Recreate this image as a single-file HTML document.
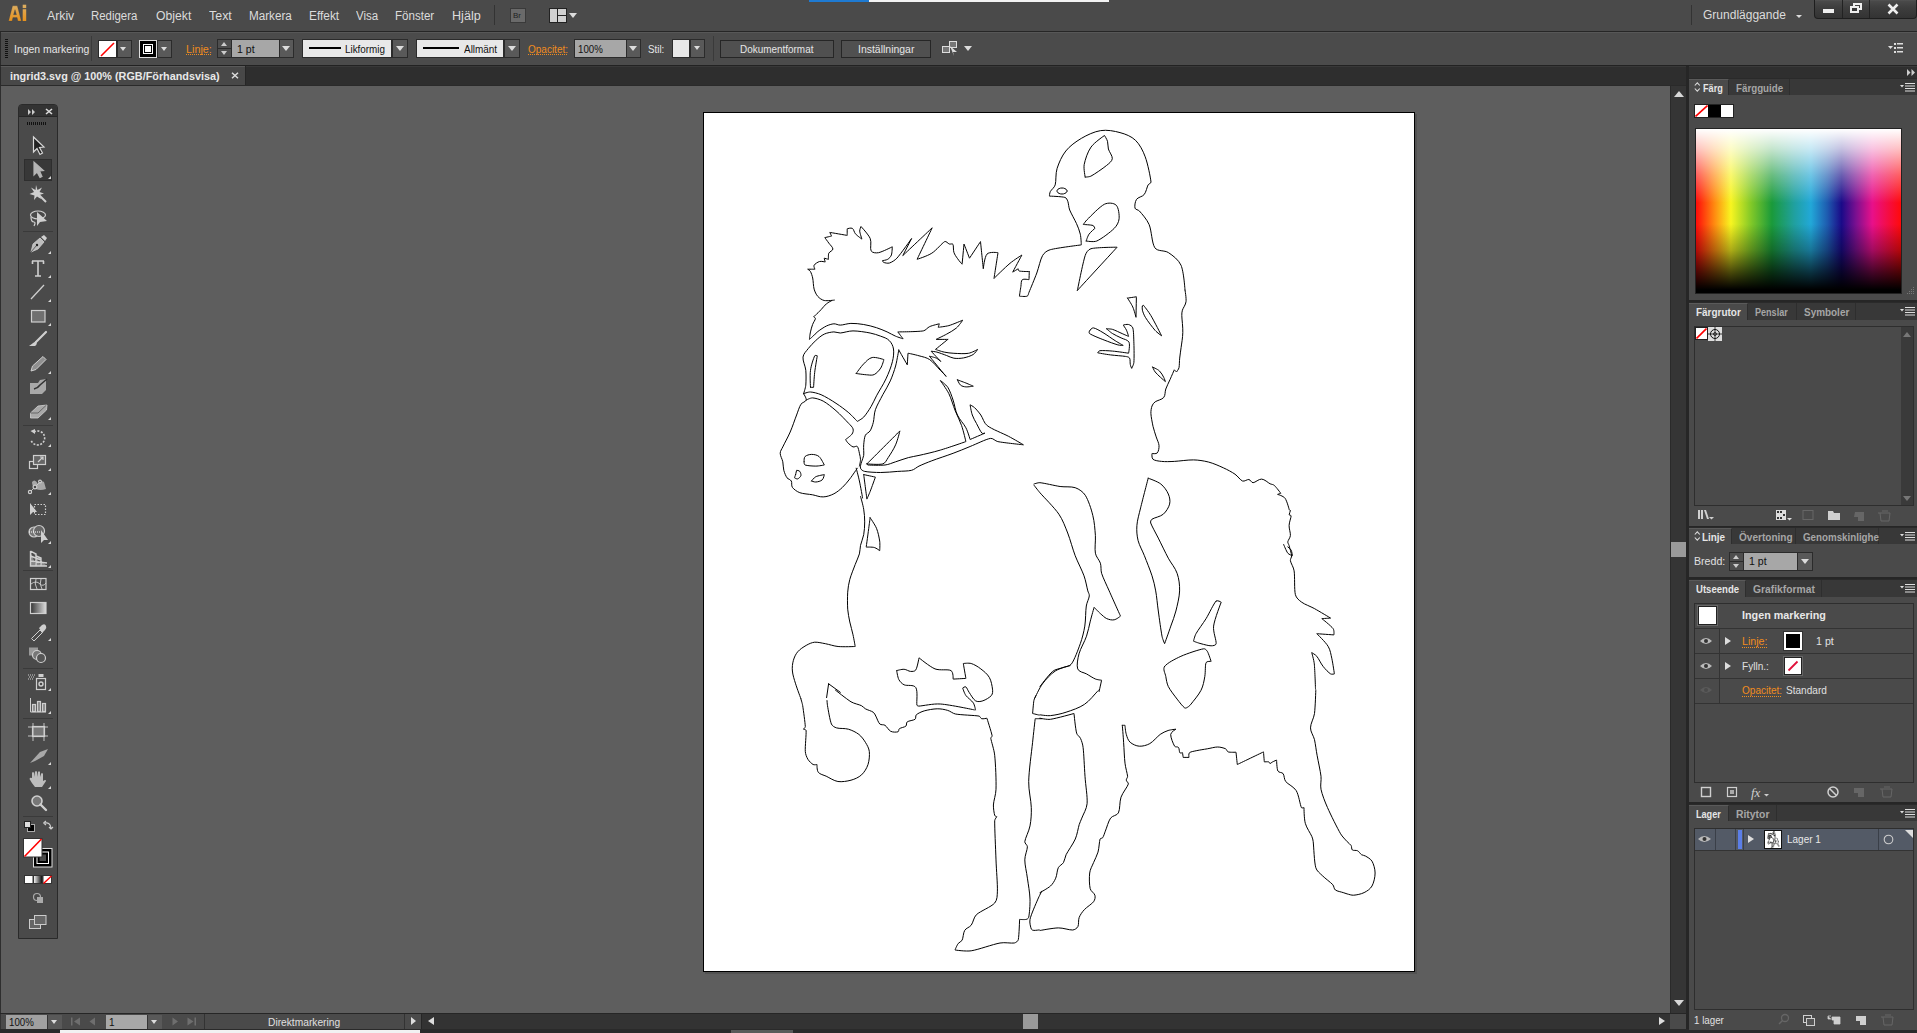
<!DOCTYPE html>
<html><head><meta charset="utf-8">
<style>
*{margin:0;padding:0;box-sizing:border-box}
html,body{width:1917px;height:1033px;overflow:hidden;background:#4a4a4a;font-family:"Liberation Sans",sans-serif;color:#e0e0e0}
.a{position:absolute}
.t{position:absolute;white-space:nowrap;line-height:1}
.menu{font-size:12px;color:#dcdcdc;top:10px}
.cb{font-size:10.5px;color:#e6e6e6}
.org{color:#f08c1e}
.dd{position:absolute;background:#595959;border:1px solid #2b2b2b}
#horse path{vector-effect:non-scaling-stroke}
.tri{position:absolute;width:0;height:0;border-left:4px solid transparent;border-right:4px solid transparent;border-top:5px solid #dcdcdc}
</style></head><body>
<!-- menu bar -->
<div class="a" style="left:0;top:0;width:1917px;height:31px;background:#4a4a4a"></div>
<div class="a" style="left:0;top:31px;width:1917px;height:1px;background:#262626"></div>
<div class="a" style="left:809px;top:0;width:60px;height:2px;background:#1e7ad2"></div>
<div class="a" style="left:869px;top:0;width:240px;height:2px;background:#f2f2f2"></div>
<svg class="a" style="left:0;top:0" width="32" height="26"><defs><linearGradient id="aig" gradientUnits="userSpaceOnUse" x1="0" y1="5" x2="0" y2="21"><stop offset="0" stop-color="#dcae62"/><stop offset="1" stop-color="#e8921c"/></linearGradient></defs><path d="M8.6 21 L12.6 5.8 L17.3 5.8 L21.3 21 L17.9 21 L17.1 17.6 L12.9 17.6 L12.1 21 Z M13.5 14.7 L16.5 14.7 L15 9.6 Z" fill="url(#aig)" fill-rule="evenodd" stroke="#2e3440" stroke-width="0.4" stroke-opacity="0.5"/><rect x="22.7" y="4.7" width="3.5" height="3.4" fill="url(#aig)"/><rect x="22.7" y="9.2" width="3.5" height="11.8" fill="url(#aig)"/></svg>
<div class="t menu" style="transform:scaleX(1.022);transform-origin:0 0;left:47px">Arkiv</div>
<div class="t menu" style="transform:scaleX(0.951);transform-origin:0 0;left:91px">Redigera</div>
<div class="t menu" style="transform:scaleX(1.017);transform-origin:0 0;left:156px">Objekt</div>
<div class="t menu" style="transform:scaleX(1.036);transform-origin:0 0;left:209px">Text</div>
<div class="t menu" style="transform:scaleX(0.973);transform-origin:0 0;left:249px">Markera</div>
<div class="t menu" style="transform:scaleX(0.990);transform-origin:0 0;left:309px">Effekt</div>
<div class="t menu" style="transform:scaleX(0.957);transform-origin:0 0;left:356px">Visa</div>
<div class="t menu" style="transform:scaleX(0.963);transform-origin:0 0;left:395px">Fönster</div>
<div class="t menu" style="transform:scaleX(1.051);transform-origin:0 0;left:452px">Hjälp</div>
<div class="a" style="left:494px;top:5px;width:1px;height:20px;background:#333"></div>
<div class="a" style="left:510px;top:8px;width:16px;height:15px;background:#6a6a6a;border:1px solid #3a3a3a"></div>
<div class="t" style="left:513px;top:12px;font-size:8px;color:#222">Br</div>
<div class="a" style="left:549px;top:8px;width:18px;height:15px;border:1px solid #222;background:#d0d0d0"></div>
<div class="a" style="left:557px;top:9px;width:1px;height:13px;background:#222"></div>
<div class="a" style="left:558px;top:15px;width:8px;height:1px;background:#222"></div>
<div class="tri" style="left:569px;top:13px;border-left-width:4px;border-right-width:4px;border-top-width:5px"></div>
<div class="a" style="left:1691px;top:5px;width:1px;height:20px;background:#333"></div>
<div class="t menu" style="transform:scaleX(0.961);transform-origin:0 0;left:1703px;top:9px;font-size:12.5px">Grundläggande</div>
<div class="tri" style="left:1796px;top:15px;border-left-width:3px;border-right-width:3px;border-top-width:3px"></div>
<div class="a" style="left:1814px;top:0;width:103px;height:19px;background:linear-gradient(#555 0,#4a4a4a 1px,#3e3e3e 40%,#333 100%);border:1px solid #1e1e1e;border-top:none;border-radius:0 0 4px 4px"></div>
<div class="a" style="left:1842px;top:0;width:1px;height:18px;background:#222"></div>
<div class="a" style="left:1869px;top:0;width:1px;height:18px;background:#222"></div>
<div class="a" style="left:1823px;top:9px;width:11px;height:4px;background:#eee"></div>
<div class="a" style="left:1853px;top:3px;width:9px;height:7px;border:2px solid #eee"></div>
<div class="a" style="left:1850px;top:6px;width:9px;height:7px;border:2px solid #eee;background:#383838"></div>
<svg class="a" style="left:1886px;top:3px" width="14" height="12"><path d="M2.5 1.5L11.5 10.5M11.5 1.5L2.5 10.5" stroke="#eee" stroke-width="2.6"/></svg>

<!-- control bar -->
<div class="a" style="left:0;top:32px;width:1917px;height:33px;background:#4b4b4b;border-left:1px solid #2a2a2a"></div>
<div class="a" style="left:1px;top:32px;width:1916px;height:1px;background:#575757"></div>
<div class="a" style="left:0;top:65px;width:1917px;height:1px;background:#222"></div>

<div class="a" style="left:5px;top:39px;width:3px;height:19px;background:repeating-linear-gradient(#111 0 1px,#4b4b4b 1px 2px)"></div>
<div class="t cb" style="transform:scaleX(0.993);transform-origin:0 0;left:14px;top:44px">Ingen markering</div>
<div class="a" style="left:91px;top:36px;width:1px;height:25px;background:#3a3a3a"></div>
<div class="a" style="left:98px;top:40px;width:19px;height:18px;background:#fff;border:1px solid #2a2a2a"></div>
<svg class="a" style="left:99px;top:41px" width="17" height="16"><line x1="2" y1="15" x2="15" y2="2" stroke="#f00" stroke-width="1.6"/></svg>
<div class="dd" style="left:117px;top:40px;width:15px;height:18px"></div>
<div class="tri" style="left:120px;top:47px;border-left-width:3.5px;border-right-width:3.5px;border-top-width:4px"></div>
<div class="a" style="left:139px;top:40px;width:18px;height:18px;background:#000;border:1px solid #ddd"></div>
<div class="a" style="left:143px;top:44px;width:10px;height:10px;border:1px solid #fff;background:#000"></div>
<div class="a" style="left:145px;top:46px;width:6px;height:6px;background:#fff"></div>
<div class="dd" style="left:157px;top:40px;width:15px;height:18px"></div>
<div class="tri" style="left:161px;top:47px;border-left-width:3.5px;border-right-width:3.5px;border-top-width:4px"></div>
<div class="t cb org" style="transform:scaleX(1.028);transform-origin:0 0;left:186px;top:44px">Linje:</div>
<div class="a" style="left:186px;top:54px;width:25px;height:1px;background:repeating-linear-gradient(90deg,#f08c1e 0 1px,transparent 1px 2px)"></div>
<div class="dd" style="left:217px;top:39px;width:15px;height:19px;background:#4e4e4e"></div>
<div class="a" style="left:218px;top:48px;width:13px;height:1px;background:#2b2b2b"></div>
<div class="a" style="left:221px;top:42px;width:0;height:0;border-left:3.5px solid transparent;border-right:3.5px solid transparent;border-bottom:4px solid #ccc"></div>
<div class="tri" style="left:221px;top:51px;border-left-width:3.5px;border-right-width:3.5px;border-top-width:4px;border-top-color:#ccc"></div>
<div class="a" style="left:232px;top:39px;width:47px;height:19px;background:#a7a7a7;border-top:1px solid #2b2b2b;border-bottom:1px solid #2b2b2b"></div>
<div class="t cb" style="transform:scaleX(1.006);transform-origin:0 0;left:237px;top:44px;color:#111">1 pt</div>
<div class="dd" style="left:279px;top:39px;width:15px;height:19px"></div>
<div class="tri" style="left:282px;top:46px;border-left-width:4px;border-right-width:4px;border-top-width:5px"></div>
<div class="a" style="left:302px;top:39px;width:90px;height:19px;background:#e8e8e8;border:1px solid #2b2b2b"></div>
<div class="a" style="left:309px;top:47px;width:32px;height:2px;background:#000"></div>
<div class="t cb" style="transform:scaleX(0.939);transform-origin:0 0;left:345px;top:44px;color:#111">Likformig</div>
<div class="dd" style="left:392px;top:39px;width:16px;height:19px"></div>
<div class="tri" style="left:396px;top:46px;border-left-width:4px;border-right-width:4px;border-top-width:5px"></div>
<div class="a" style="left:416px;top:39px;width:88px;height:19px;background:#e8e8e8;border:1px solid #2b2b2b"></div>
<div class="a" style="left:423px;top:47px;width:36px;height:2px;background:#000"></div>
<div class="t cb" style="transform:scaleX(0.946);transform-origin:0 0;left:464px;top:44px;color:#111">Allmänt</div>
<div class="dd" style="left:504px;top:39px;width:16px;height:19px"></div>
<div class="tri" style="left:508px;top:46px;border-left-width:4px;border-right-width:4px;border-top-width:5px"></div>
<div class="t cb org" style="transform:scaleX(0.952);transform-origin:0 0;left:528px;top:44px">Opacitet:</div>
<div class="a" style="left:528px;top:54px;width:39px;height:1px;background:repeating-linear-gradient(90deg,#f08c1e 0 1px,transparent 1px 2px)"></div>
<div class="a" style="left:574px;top:39px;width:52px;height:19px;background:#a7a7a7;border:1px solid #2b2b2b;border-right:none"></div>
<div class="t cb" style="transform:scaleX(0.922);transform-origin:0 0;left:578px;top:44px;color:#111">100%</div>
<div class="dd" style="left:626px;top:39px;width:15px;height:19px"></div>
<div class="tri" style="left:629px;top:46px;border-left-width:4px;border-right-width:4px;border-top-width:5px"></div>
<div class="t cb" style="transform:scaleX(0.931);transform-origin:0 0;left:648px;top:44px">Stil:</div>
<div class="a" style="left:672px;top:39px;width:18px;height:19px;background:#e8e8e8;border:1px solid #2b2b2b"></div>
<div class="dd" style="left:690px;top:39px;width:15px;height:19px"></div>
<div class="tri" style="left:694px;top:46px;border-left-width:3.5px;border-right-width:3.5px;border-top-width:4px"></div>
<div class="a" style="left:713px;top:36px;width:1px;height:25px;background:#3a3a3a"></div>
<div class="a" style="left:720px;top:40px;width:114px;height:18px;background:#505050;border:1px solid #262626"></div>
<div class="t cb" style="transform:scaleX(0.946);transform-origin:0 0;left:740px;top:44px">Dokumentformat</div>
<div class="a" style="left:841px;top:40px;width:90px;height:18px;background:#505050;border:1px solid #262626"></div>
<div class="t cb" style="transform:scaleX(0.996);transform-origin:0 0;left:858px;top:44px">Inställningar</div>
<svg class="a" style="left:941px;top:40px" width="20" height="17"><rect x="1.5" y="6.5" width="7" height="6" fill="#777" stroke="#ddd"/><rect x="8.5" y="1.5" width="7" height="6" fill="#777" stroke="#ddd"/><path d="M9 6 L16 12 L12 12 L13 16 Z" fill="#ddd"/></svg>
<div class="tri" style="left:964px;top:46px;border-left-width:4px;border-right-width:4px;border-top-width:5px"></div>
<svg class="a" style="left:1888px;top:43px" width="16" height="10"><path d="M0 3 L5 3 L2.5 6Z" fill="#ddd"/><rect x="6" y="0" width="2" height="2" fill="#ddd"/><rect x="6" y="4" width="2" height="2" fill="#ddd"/><rect x="6" y="8" width="2" height="2" fill="#ddd"/><rect x="9" y="0" width="6" height="1.5" fill="#ddd"/><rect x="9" y="4" width="6" height="1.5" fill="#ddd"/><rect x="9" y="8" width="6" height="1.5" fill="#ddd"/></svg>

<!-- tab bar -->
<div class="a" style="left:0;top:66px;width:1688px;height:19px;background:#2e2e2e;border-top:1px solid #383838;border-left:1px solid #2a2a2a"></div>
<div class="a" style="left:1px;top:66px;width:244px;height:19px;background:#484848;border-top:1px solid #5a5a5a"></div>
<div class="a" style="left:245px;top:66px;width:1px;height:19px;background:#262626"></div>
<div class="t" style="transform:scaleX(0.984);transform-origin:0 0;left:10px;top:71px;font-size:11px;font-weight:bold;color:#e8e8e8">ingrid3.svg @ 100% (RGB/Förhandsvisa)</div>
<svg class="a" style="left:231px;top:72px" width="8" height="7"><path d="M1 0.8L7 6.2M7 0.8L1 6.2" stroke="#ddd" stroke-width="1.5"/></svg>
<div class="a" style="left:0;top:85px;width:1688px;height:1px;background:#2a2a2a"></div>
<!-- canvas -->
<div class="a" style="left:0;top:86px;width:1670px;height:927px;background:#5e5e5e;border-left:1px solid #2e2e2e"></div>
<!-- v scrollbar -->
<div class="a" style="left:1670px;top:86px;width:1px;height:927px;background:#2a2a2a"></div>
<div class="a" style="left:1671px;top:86px;width:15px;height:927px;background:#353535"></div>
<div class="a" style="left:1674px;top:91px;width:0;height:0;border-left:5px solid transparent;border-right:5px solid transparent;border-bottom:6px solid #d8d8d8"></div>
<div class="a" style="left:1674px;top:1000px;width:0;height:0;border-left:5px solid transparent;border-right:5px solid transparent;border-top:6px solid #d8d8d8"></div>
<div class="a" style="left:1671px;top:542px;width:15px;height:15px;background:#9a9a9a"></div>
<div class="a" style="left:1686px;top:66px;width:3px;height:967px;background:#262626"></div>
<!-- status bar -->
<div class="a" style="left:0;top:1013px;width:1688px;height:1px;background:#262626"></div>
<div class="a" style="left:0;top:1014px;width:1670px;height:15px;background:#333"></div>
<div class="a" style="left:1px;top:1014px;width:420px;height:15px;background:#4a4a4a"></div>
<div class="a" style="left:6px;top:1015px;width:41px;height:14px;background:#a0a0a0"></div>
<div class="t" style="transform:scaleX(0.969);transform-origin:0 0;left:9px;top:1018px;font-size:10px;color:#111">100%</div>
<div class="a" style="left:47px;top:1015px;width:15px;height:14px;background:#595959;border-left:1px solid #333"></div>
<div class="tri" style="left:51px;top:1020px;border-left-width:3.5px;border-right-width:3.5px;border-top-width:4px"></div>
<svg class="a" style="left:71px;top:1017px" width="10" height="9"><rect x="0" y="0.5" width="1.5" height="8" fill="#6e6e6e"/><path d="M9 0.5L9 8.5L3 4.5Z" fill="#6e6e6e"/></svg>
<svg class="a" style="left:89px;top:1017px" width="7" height="9"><path d="M6 0.5L6 8.5L0.5 4.5Z" fill="#6e6e6e"/></svg>
<div class="a" style="left:106px;top:1015px;width:41px;height:14px;background:#a8a8a8"></div>
<div class="t" style="left:109px;top:1018px;font-size:10px;color:#111">1</div>
<div class="a" style="left:147px;top:1015px;width:15px;height:14px;background:#595959;border-left:1px solid #333"></div>
<div class="tri" style="left:151px;top:1020px;border-left-width:3.5px;border-right-width:3.5px;border-top-width:4px"></div>
<svg class="a" style="left:172px;top:1017px" width="7" height="9"><path d="M0.5 0.5L0.5 8.5L6 4.5Z" fill="#6e6e6e"/></svg>
<svg class="a" style="left:187px;top:1017px" width="10" height="9"><path d="M0.5 0.5L0.5 8.5L6.5 4.5Z" fill="#6e6e6e"/><rect x="7.5" y="0.5" width="1.5" height="8" fill="#6e6e6e"/></svg>
<div class="a" style="left:204px;top:1014px;width:1px;height:15px;background:#333"></div>
<div class="t" style="transform:scaleX(0.974);transform-origin:0 0;left:268px;top:1017px;font-size:10.5px;color:#e0e0e0">Direktmarkering</div>
<div class="a" style="left:404px;top:1014px;width:1px;height:15px;background:#333"></div>
<div class="a" style="left:411px;top:1017px;width:0;height:0;border-top:4px solid transparent;border-bottom:4px solid transparent;border-left:5px solid #ddd"></div>
<div class="a" style="left:421px;top:1014px;width:1px;height:15px;background:#262626"></div>
<div class="a" style="left:428px;top:1017px;width:0;height:0;border-top:4.5px solid transparent;border-bottom:4.5px solid transparent;border-right:6px solid #ddd"></div>
<div class="a" style="left:1659px;top:1017px;width:0;height:0;border-top:4.5px solid transparent;border-bottom:4.5px solid transparent;border-left:6px solid #ddd"></div>
<div class="a" style="left:1023px;top:1014px;width:15px;height:15px;background:#9a9a9a"></div>
<div class="a" style="left:1671px;top:1014px;width:15px;height:15px;background:#4a4a4a"></div>
<div class="a" style="left:0;top:1029px;width:1917px;height:4px;background:#2a2a2a"></div>
<div class="a" style="left:60px;top:1030px;width:360px;height:3px;background:#f2f2f2"></div>
<div class="a" style="left:731px;top:1030px;width:62px;height:3px;background:#5a5a5a"></div>

<!-- artboard -->
<div class="a" style="left:705px;top:114px;width:712px;height:860px;background:rgba(0,0,0,0.12)"></div>
<div class="a" style="left:703px;top:112px;width:712px;height:860px;background:#fff;border:1px solid #000"></div>
<!--DRAW--><svg class="a" style="left:0;top:0" width="1917" height="1033" viewBox="0 0 1917 1033"><g fill="none" stroke="#000" stroke-width="1" stroke-linejoin="round" stroke-linecap="round"><g id="horse">
<path d="M834.4 300.1 C834.4 300.1 827.0 301.1 824.2 300.5 C821.8 299.9 819.5 298.3 817.8 296.4 C816.1 294.5 814.9 291.7 814.1 289.1 C813.3 286.0 813.3 280.9 812.7 278.0 C812.2 275.8 811.3 273.1 810.5 271.6 C809.9 270.5 807.7 269.2 807.7 269.2 C807.7 269.2 815.0 269.2 815.0 269.2 C815.0 269.2 813.4 266.4 814.1 265.2 C814.9 263.9 817.8 262.0 819.6 261.5 C821.4 261.0 825.2 262.0 825.2 262.0 C825.2 262.0 824.2 258.2 824.2 258.2 C824.2 258.2 828.5 259.3 828.5 259.3 C828.5 259.3 828.1 254.9 828.8 253.2 C829.6 251.5 832.9 250.7 832.9 249.0 C832.9 247.3 830.2 245.0 828.8 243.1 C827.5 241.2 824.8 237.6 824.8 237.6 C824.8 237.6 831.6 236.1 831.6 236.1 C831.6 236.1 829.8 232.4 829.8 232.4 C829.8 232.4 847.2 235.4 847.2 235.4 C847.2 235.4 847.2 228.8 847.2 228.8 C847.2 228.8 851.0 227.5 852.4 228.4 C853.8 229.2 854.1 232.3 855.5 233.9 C857.1 235.7 861.9 239.1 861.9 239.1 C861.9 239.1 859.9 233.2 859.7 231.1 C859.6 229.6 861.0 226.5 861.0 226.5 C861.0 226.5 868.5 234.5 870.2 238.5 C871.8 242.3 869.8 248.5 871.1 250.8 C872.4 253.0 876.0 253.1 878.5 252.7 C882.0 252.0 892.3 246.8 892.3 246.8 C892.3 246.8 892.1 253.0 891.4 255.0 C890.7 256.8 889.2 258.4 887.7 259.3 C886.2 260.2 882.5 260.6 882.5 260.6 C882.5 260.6 883.0 262.2 883.6 262.4 C884.8 262.8 887.6 263.6 889.5 263.0 C891.7 262.3 894.9 260.3 896.9 258.2 C900.6 254.1 911.6 238.5 911.6 238.5 C911.6 238.5 902.8 255.6 902.8 255.6 C902.8 255.6 932.2 227.8 932.2 227.8 C932.2 227.8 917.1 259.3 917.1 259.3 C917.1 259.3 927.3 256.1 931.8 253.2 C936.4 250.3 941.8 243.2 944.7 241.6 C946.2 240.8 947.9 243.6 949.3 244.0 C950.4 244.4 952.4 243.3 953.0 244.4 C953.7 245.8 953.1 249.9 953.9 252.3 C954.6 254.6 956.2 256.7 957.6 258.7 C958.9 260.7 962.1 264.2 962.1 264.2 C962.1 264.2 964.0 244.0 964.0 244.0 C964.0 244.0 969.5 258.2 969.5 258.2 C969.5 258.2 980.5 241.6 980.5 241.6 C980.5 241.6 983.3 268.8 983.3 268.8 C983.3 268.8 984.5 256.8 987.0 254.1 C989.4 251.4 998.0 252.7 998.0 252.7 C998.0 252.7 994.0 278.4 994.0 278.4 C994.0 278.4 1005.3 267.2 1010.0 263.3 C1013.7 260.2 1021.9 255.0 1021.9 255.0 C1021.9 255.0 1012.7 272.1 1012.7 272.1 C1012.7 272.1 1018.2 268.8 1018.2 268.8 C1018.2 268.8 1018.4 270.9 1019.2 271.0 C1021.0 271.5 1029.3 271.6 1029.3 271.6"/>
<path d="M1029.3 271.6 C1029.3 271.6 1029.0 279.7 1029.0 279.7 C1029.0 279.7 1023.6 278.6 1022.3 279.7 C1020.9 280.8 1021.3 284.2 1020.9 286.5 C1020.4 289.2 1019.4 296.2 1019.4 296.2 C1019.4 296.2 1025.5 296.8 1027.1 296.2 C1028.4 295.7 1028.4 293.6 1029.0 292.3 C1030.6 288.4 1034.5 279.1 1036.8 273.0 C1038.9 267.2 1040.3 259.4 1042.6 255.5 C1044.2 252.7 1047.2 250.5 1050.3 249.7 C1056.8 247.9 1081.3 244.9 1081.3 244.9 C1081.3 244.9 1081.1 237.7 1080.3 234.2 C1079.5 230.6 1078.0 227.0 1076.5 223.6 C1074.7 219.6 1071.2 213.7 1069.7 210.0 C1068.6 207.2 1068.6 203.4 1067.8 201.3 C1067.2 199.8 1066.5 197.8 1064.9 197.4 C1061.8 196.5 1049.4 196.1 1049.4 196.1 C1049.4 196.1 1049.6 193.0 1050.3 191.6 C1051.3 189.7 1054.4 187.6 1055.2 184.9 C1056.3 181.0 1055.4 173.7 1057.1 168.4 C1058.9 162.8 1061.8 156.0 1065.8 151.0 C1069.8 146.0 1075.6 141.8 1081.3 138.4 C1087.1 135.0 1094.2 131.6 1100.7 130.6 C1107.1 129.6 1114.2 131.0 1120.0 132.6 C1125.6 134.1 1131.3 136.3 1135.5 140.3 C1139.7 144.3 1143.0 150.8 1145.2 156.8 C1147.8 163.8 1150.5 177.3 1151.0 182.0 C1151.1 183.4 1148.8 183.7 1148.1 184.9 C1147.0 187.0 1146.1 192.1 1144.2 194.5 C1142.3 196.9 1138.0 197.1 1136.5 199.4 C1135.0 201.7 1134.5 206.2 1135.0 208.1 C1135.4 209.8 1138.3 209.7 1139.4 211.0 C1141.8 213.7 1146.9 219.4 1149.1 224.5 C1151.7 230.6 1151.7 243.1 1154.9 247.8 C1157.6 251.7 1164.4 250.0 1168.4 252.6 C1172.8 255.5 1178.6 259.8 1181.0 265.2 C1183.8 271.4 1185.0 290.0 1185.0 290.0"/>
<path d="M1085.2 177.1 C1085.2 177.1 1083.4 168.6 1084.2 164.5 C1085.2 159.5 1087.6 151.9 1091.0 147.1 C1094.4 142.3 1104.5 135.5 1104.5 135.5 C1104.5 135.5 1106.9 139.2 1107.5 141.3 C1108.2 143.6 1107.7 146.5 1108.4 149.0 C1109.2 151.9 1112.6 155.9 1112.3 158.7 C1112.0 161.4 1108.8 163.6 1106.5 165.5 C1103.0 168.4 1094.5 174.2 1091.0 176.1 C1089.3 177.0 1085.2 177.1 1085.2 177.1"/>
<path d="M1086.2 241.0 C1086.2 241.0 1087.6 236.2 1089.0 234.2 C1090.5 232.1 1094.9 228.4 1094.9 228.4 C1094.9 228.4 1094.1 225.9 1093.0 225.5 C1091.1 224.8 1083.3 224.5 1083.3 224.5 C1083.3 224.5 1085.6 221.1 1087.1 219.7 C1090.6 216.3 1099.7 206.6 1104.5 204.2 C1108.0 202.5 1113.8 202.8 1116.2 205.2 C1118.6 207.6 1119.4 214.8 1119.1 218.7 C1118.8 222.3 1116.8 225.8 1114.2 228.4 C1110.5 232.1 1101.5 238.9 1096.8 241.0 C1093.6 242.4 1086.2 241.0 1086.2 241.0"/>
<path d="M1077.4 290.4 C1077.4 290.4 1082.9 262.4 1085.2 255.5 C1086.1 252.7 1088.1 249.5 1091.0 248.7 C1096.3 247.3 1117.1 247.2 1117.1 247.2 C1117.1 247.2 1077.4 290.4 1077.4 290.4"/>
<path d="M1067.0 191.0 C1067.0 191.3 1066.9 191.6 1066.8 191.9 C1066.6 192.2 1066.3 192.5 1066.0 192.8 C1065.7 193.0 1065.3 193.3 1064.9 193.4 C1064.5 193.6 1064.0 193.8 1063.5 193.9 C1063.1 193.9 1062.5 194.0 1062.0 194.0 C1061.5 194.0 1060.9 193.9 1060.5 193.9 C1060.0 193.8 1059.5 193.6 1059.1 193.4 C1058.7 193.3 1058.3 193.0 1058.0 192.8 C1057.7 192.5 1057.4 192.2 1057.2 191.9 C1057.1 191.6 1057.0 191.3 1057.0 191.0 C1057.0 190.7 1057.1 190.4 1057.2 190.1 C1057.4 189.8 1057.7 189.5 1058.0 189.2 C1058.3 189.0 1058.7 188.7 1059.1 188.6 C1059.5 188.4 1060.0 188.2 1060.5 188.1 C1060.9 188.1 1061.5 188.0 1062.0 188.0 C1062.5 188.0 1063.1 188.1 1063.5 188.1 C1064.0 188.2 1064.5 188.4 1064.9 188.6 C1065.3 188.7 1065.7 189.0 1066.0 189.2 C1066.3 189.5 1066.6 189.8 1066.8 190.1 C1066.9 190.4 1067.0 190.7 1067.0 191.0"/>
<path d="M831.7 300.6 C831.7 300.6 828.0 302.5 826.4 303.8 C824.6 305.3 822.9 307.7 821.1 309.6 C819.3 311.5 816.6 314.2 815.4 315.3 C814.8 315.8 813.6 316.6 813.6 316.6 C813.6 316.6 815.5 317.8 815.4 318.7 C815.2 320.0 813.3 322.5 812.6 324.5 C811.8 326.7 811.0 329.5 810.5 331.9 C809.9 334.4 809.4 339.4 809.4 339.4 C809.4 339.4 811.5 337.6 812.6 336.6 C814.0 335.3 816.0 333.0 817.9 331.5 C820.2 329.7 823.8 327.3 826.4 326.0 C828.8 324.9 831.6 324.0 833.9 323.8 C836.0 323.7 838.1 325.2 840.3 325.1 C843.1 325.1 847.3 323.5 850.9 323.4 C854.8 323.3 859.5 323.8 863.7 324.5 C867.9 325.2 872.6 326.4 876.5 327.7 C880.1 328.8 883.9 330.5 887.1 331.9 C890.0 333.2 893.0 335.1 895.6 336.2 C898.0 337.2 903.1 338.8 903.1 338.8 C903.1 338.8 897.8 331.9 897.8 331.9 C897.8 331.9 918.0 331.8 923.3 330.9 C925.8 330.5 927.3 327.6 929.7 326.6 C932.3 325.4 939.3 323.8 939.3 323.8 C939.3 323.8 938.2 327.3 938.2 327.3 C938.2 327.3 945.4 326.5 948.9 325.6 C952.9 324.4 962.7 320.2 962.7 320.2 C962.7 320.2 958.9 325.9 956.3 328.1 C953.6 330.4 950.0 332.2 946.7 334.1 C943.3 335.9 936.1 339.4 936.1 339.4 C936.1 339.4 947.8 339.4 947.8 339.4"/>
<path d="M803.6 393.7 C803.6 393.7 805.5 388.1 805.8 385.2 C806.1 381.3 806.2 374.9 805.8 370.3 C805.3 365.8 802.6 360.7 803.0 357.1 C803.4 353.7 806.3 351.2 808.3 348.5 C810.5 345.8 813.1 342.9 815.8 340.5 C818.4 338.1 821.3 335.5 824.3 334.1 C827.3 332.7 831.2 332.1 833.9 331.9 C836.0 331.8 838.1 333.1 840.3 333.0 C843.5 332.8 848.7 330.9 853.0 330.9 C858.0 330.9 865.5 332.1 870.1 333.0 C873.7 333.7 877.5 335.0 880.7 336.2 C883.7 337.3 887.1 338.3 889.2 340.5 C891.4 342.6 893.0 345.8 893.5 349.0 C894.0 352.5 893.5 357.6 892.4 361.7 C891.2 366.7 888.6 373.3 886.0 378.8 C883.4 384.5 878.9 391.2 876.5 395.8 C874.6 399.3 873.2 403.1 871.1 406.5 C869.0 410.0 866.0 414.6 863.7 417.1 C861.9 419.0 857.3 421.4 857.3 421.4 C857.3 421.4 851.8 415.4 848.8 412.8 C845.2 409.8 840.5 406.2 836.0 403.3 C831.4 400.2 825.4 396.6 821.1 394.7 C817.7 393.3 813.4 392.2 810.5 392.0 C808.1 391.8 803.6 393.7 803.6 393.7"/>
<path d="M898.8 350.0 C898.8 350.0 898.1 353.6 897.8 355.4 C897.2 358.0 896.6 362.5 895.6 366.0 C894.4 370.3 892.4 376.1 890.3 380.9 C888.2 385.7 885.3 390.1 882.8 394.7 C880.4 399.5 877.0 405.0 875.4 409.7 C874.0 413.7 874.2 418.9 873.3 422.4 C872.5 425.4 871.4 428.8 870.1 430.9 C869.0 432.7 866.3 433.3 865.4 435.2 C864.3 437.5 864.0 441.6 863.7 444.8 C863.4 448.2 864.0 452.6 863.7 455.4 C863.4 457.7 862.1 459.7 861.6 461.8 C861.0 463.9 860.0 466.6 860.5 468.2 C861.0 469.8 863.0 471.0 864.7 471.4 C868.1 472.1 875.4 472.5 880.7 472.5 C886.2 472.5 892.6 471.8 897.8 471.4 C902.4 471.1 908.0 471.2 911.6 470.3 C914.4 469.6 916.5 467.3 919.0 466.1 C922.4 464.5 927.5 462.4 931.8 460.8 C937.5 458.6 946.7 455.7 953.1 453.3 C958.8 451.2 964.5 448.8 970.1 446.5 C976.4 444.0 985.8 439.2 990.4 438.4 C993.0 437.9 995.2 441.1 997.8 441.6 C1003.3 442.7 1023.4 444.8 1023.4 444.8 C1023.4 444.8 1013.5 438.9 1008.5 436.3 C1002.4 433.1 991.8 429.2 987.2 425.6 C983.9 423.1 982.9 418.0 980.8 415.0 C978.9 412.3 976.2 409.2 974.4 407.5 C973.2 406.4 970.1 404.8 970.1 404.8 C970.1 404.8 971.2 411.9 972.3 415.0 C973.3 418.0 975.0 420.7 976.5 423.5 C978.1 426.5 980.4 431.5 981.9 433.1 C982.6 433.9 985.0 433.1 985.0 433.1 C985.0 433.1 970.1 439.5 970.1 439.5 C970.1 439.5 967.8 431.4 965.9 427.8 C963.8 423.7 959.5 419.6 957.4 415.0 C955.2 410.4 954.7 404.7 953.1 400.1 C951.6 395.7 949.9 390.6 947.8 387.3 C945.9 384.5 940.3 380.5 940.3 380.5 C940.3 380.5 946.5 389.0 948.9 393.7 C951.3 398.7 953.1 405.4 955.2 410.7 C957.2 415.7 959.9 420.5 961.6 425.6 C963.4 430.8 965.9 441.6 965.9 441.6 C965.9 441.6 948.1 447.8 940.3 450.1 C933.3 452.2 924.4 454.2 919.0 455.4 C915.5 456.3 911.9 456.6 908.4 457.6 C904.5 458.6 899.5 460.6 895.6 461.8 C892.1 462.9 888.7 464.6 885.0 465.0 C880.4 465.5 871.0 465.2 867.9 465.0 C867.4 465.0 866.9 463.9 866.9 463.9"/>
<path d="M866.9 463.9 C866.9 463.9 899.9 430.9 899.9 430.9 C899.9 430.9 897.6 440.4 895.6 444.8 C893.7 449.2 890.3 454.4 888.2 457.6 C886.6 459.9 885.5 463.1 882.8 463.9 C879.3 465.0 866.9 463.9 866.9 463.9"/>
<path d="M898.8 350.0 C898.8 350.0 907.3 364.9 907.3 364.9 C907.3 364.9 908.0 353.2 908.0 353.2 C908.0 353.2 915.4 354.7 919.0 355.8 C922.7 356.8 926.6 357.5 929.7 359.6 C933.2 362.0 937.7 367.6 940.3 370.3 C942.1 372.0 945.7 375.6 945.7 375.6"/>
<path d="M957.4 379.8 C957.4 379.8 959.1 384.0 960.6 385.2 C962.0 386.3 964.0 386.7 965.9 386.9 C968.0 387.0 973.3 386.2 973.3 386.2 C973.3 386.2 968.4 384.0 965.9 383.0 C963.2 382.0 957.4 379.8 957.4 379.8"/>
<path d="M856.2 373.5 C856.2 373.5 861.0 366.5 863.7 363.9 C866.2 361.4 868.8 358.2 872.2 357.5 C875.6 356.8 883.9 359.6 883.9 359.6 C883.9 359.6 882.3 365.6 880.7 368.1 C879.1 370.6 876.5 373.4 874.3 374.5 C872.4 375.5 870.1 375.1 867.9 374.9 C864.9 374.8 856.2 373.5 856.2 373.5"/>
<path d="M810.5 387.3 C810.5 387.3 809.7 375.5 810.5 370.3 C811.1 365.3 813.6 358.2 814.7 355.8 C815.1 355.0 817.3 355.8 817.3 355.8 C817.3 355.8 815.3 367.1 814.7 372.4 C814.1 377.3 813.6 387.3 813.6 387.3 C813.6 387.3 810.5 387.3 810.5 387.3"/>
<path d="M803.6 393.7 C803.6 393.7 806.7 398.3 806.2 400.1 C805.7 401.8 802.1 402.4 800.9 404.3 C799.3 406.8 798.0 411.4 796.6 415.0 C794.8 419.6 792.5 426.7 790.2 432.0 C788.0 437.1 784.4 443.4 782.8 446.9 C781.8 449.0 780.2 451.0 780.2 453.3 C780.2 455.8 782.2 459.0 782.8 461.8 C783.4 464.6 783.1 467.7 783.8 470.3 C784.5 472.9 785.8 476.0 787.0 477.8 C788.1 479.2 790.4 479.4 791.3 481.0 C792.2 482.6 791.1 485.6 792.4 487.4 C793.8 489.3 796.9 491.6 799.8 492.7 C803.2 493.9 808.7 494.1 812.6 494.8 C816.1 495.5 819.7 497.1 823.2 496.9 C826.8 496.8 830.7 495.4 833.9 493.8 C837.0 492.2 839.8 489.8 842.4 487.4 C845.1 484.9 847.5 481.8 849.8 478.9 C852.3 475.7 857.3 468.2 857.3 468.2"/>
<path d="M806.2 400.1 C806.2 400.1 810.3 397.8 812.6 397.9 C815.4 398.1 820.0 399.4 823.2 401.1 C827.1 403.3 832.0 407.2 836.0 410.7 C840.3 414.4 845.9 420.5 848.8 423.5 C850.3 425.1 852.5 427.0 853.0 428.8 C853.6 430.5 853.0 432.7 852.0 434.1 C850.7 435.9 845.6 439.5 845.6 439.5 C845.6 439.5 846.8 441.7 847.7 442.7 C849.0 443.9 851.4 446.3 853.0 446.9 C854.4 447.4 856.3 445.5 857.3 446.5 C858.4 447.6 858.9 451.1 859.4 453.3 C859.9 455.4 860.5 457.6 860.5 459.7 C860.5 461.8 859.4 466.1 859.4 466.1"/>
<path d="M804.1 461.8 C804.1 460.4 803.9 457.7 805.1 456.5 C806.4 455.3 809.3 454.4 811.5 454.4 C813.8 454.4 817.0 454.8 819.0 456.5 C821.1 458.3 824.3 465.0 824.3 465.0 C824.3 465.0 818.6 466.1 815.8 466.1 C812.6 466.1 807.1 465.7 805.1 465.0 C804.1 464.6 804.1 462.9 804.1 461.8"/>
<path d="M795.6 474.6 C795.9 473.3 796.6 470.3 796.6 470.3 C796.6 470.3 799.1 470.5 799.8 471.4 C800.5 472.3 801.2 474.4 800.9 475.7 C800.5 476.9 798.7 478.5 797.7 478.9 C796.6 479.2 794.5 477.8 794.5 477.8 C794.5 477.8 795.2 475.7 795.6 474.6"/>
<path d="M811.5 481.0 C811.5 481.0 814.0 477.6 815.8 476.7 C817.9 475.7 824.3 474.6 824.3 474.6 C824.3 474.6 823.6 478.7 822.2 479.9 C820.7 481.2 817.6 481.9 815.8 482.0 C814.3 482.2 811.5 481.0 811.5 481.0"/>
<path d="M863.7 474.6 C863.7 474.6 875.4 477.1 875.4 477.1 C875.4 477.1 871.5 488.0 870.1 491.6 C869.1 494.1 866.9 499.1 866.9 499.1 C866.9 499.1 863.7 474.6 863.7 474.6"/>
<path d="M856.2 468.2 C856.2 468.2 858.5 476.7 859.4 481.0 C860.5 485.9 862.6 498.0 862.6 498.0"/>
<path d="M860.5 496.4 C860.5 496.4 863.0 504.9 863.7 509.2 C864.4 513.4 864.7 517.7 864.7 521.9 C864.7 526.2 864.4 530.8 863.7 534.7 C863.0 538.4 861.2 542.2 860.5 545.4 C859.9 548.2 860.2 551.1 859.4 553.9 C858.5 557.1 856.5 560.9 855.2 564.5 C853.6 568.8 851.1 574.8 849.8 579.4 C848.7 583.6 848.0 587.9 847.7 592.2 C847.4 597.2 847.4 604.3 847.7 609.2 C848.0 613.5 849.0 617.8 849.8 622.0 C850.7 626.3 852.2 630.7 853.0 634.8 C853.9 638.7 855.2 646.5 855.2 646.5 C855.2 646.5 843.1 647.0 838.1 646.5 C833.8 646.1 829.3 644.4 825.4 643.7 C821.8 643.1 817.9 642.0 814.7 642.2 C811.7 642.5 808.8 643.9 806.2 645.4 C803.4 647.0 799.8 649.3 797.7 651.8 C795.6 654.2 794.3 657.3 793.4 660.3 C792.5 663.5 792.0 667.4 792.4 671.0 C792.7 674.9 794.3 679.6 795.6 683.8 C797.0 688.4 800.9 698.7 800.9 698.7"/>
<path d="M870.1 517.7 C870.1 517.7 874.9 524.5 876.5 528.3 C878.1 532.2 879.1 537.4 879.7 541.1 C880.1 544.3 879.7 550.7 879.7 550.7 C879.7 550.7 876.3 548.0 874.3 547.5 C872.1 546.9 866.2 547.1 866.2 547.1 C866.2 547.1 868.4 531.1 869.0 526.2 C869.4 523.4 870.1 517.7 870.1 517.7"/>
<path d="M896.7 670.6 C896.7 670.6 901.8 669.1 904.1 669.3 C906.4 669.4 908.6 671.3 910.5 671.4 C912.4 671.5 914.9 671.5 915.8 669.9 C917.3 667.6 919.0 657.8 919.0 657.8 C919.0 657.8 929.7 666.7 935.0 668.9 C940.0 670.8 948.0 668.9 951.0 670.6 C953.5 672.0 953.1 679.1 953.1 679.1 C953.1 679.1 965.9 678.4 965.9 678.4 C965.9 678.4 963.3 663.5 963.3 663.5 C963.3 663.5 968.7 662.8 971.2 663.5 C974.1 664.4 977.9 666.6 980.8 668.9 C983.8 671.2 987.4 674.0 989.3 677.4 C991.3 680.7 992.1 686.1 992.5 689.1 C992.8 691.2 992.8 693.8 991.4 695.5 C989.8 697.4 985.6 699.9 982.9 700.8 C980.6 701.6 977.6 702.1 975.5 700.8 C973.2 699.4 970.7 694.6 969.1 692.3 C967.9 690.6 966.9 687.7 965.9 686.9 C964.9 686.3 962.7 688.0 962.7 688.0 C962.7 688.0 964.3 693.3 965.9 695.5 C967.7 697.9 971.7 700.5 973.3 702.9 C974.7 705.0 975.5 709.9 975.5 709.9"/>
<path d="M896.7 670.6 C896.7 670.6 897.6 677.1 898.8 679.5 C900.0 681.7 901.9 683.7 904.1 684.8 C907.0 686.2 913.7 684.2 915.8 687.6 C918.0 691.0 916.4 702.0 916.9 705.0 C917.0 705.8 918.2 706.1 919.0 706.1 C922.9 705.9 933.2 703.5 940.3 704.0 C949.6 704.6 974.4 709.9 974.4 709.9"/>
<path d="M828.6 683.8 L826.6 697.6"/>
<path d="M828.6 683.8 L840.3 692.3"/>
<path d="M1070.0 665.7 C1070.0 665.7 1059.7 668.1 1055.3 671.0 C1050.7 674.0 1045.9 679.3 1042.5 683.8 C1039.4 687.9 1035.1 697.6 1035.1 697.6"/>
<path d="M800.8 698.6 C800.8 698.6 802.3 703.3 802.7 705.7 C803.4 710.3 805.1 722.7 805.3 726.6 C805.3 727.6 803.4 729.2 803.4 729.2 C803.4 729.2 806.0 729.5 806.1 730.5 C806.4 734.2 805.0 746.6 805.3 751.4 C805.5 754.2 806.6 757.1 807.9 759.3 C809.2 761.4 811.6 763.6 813.1 764.5 C814.3 765.1 817.0 764.5 817.0 764.5 C817.0 764.5 816.8 770.4 818.3 772.3 C819.9 774.3 823.5 775.0 826.2 776.2 C829.5 777.8 833.8 780.8 837.9 781.5 C842.1 782.1 847.1 781.2 851.0 780.2 C854.8 779.1 858.6 777.5 861.5 774.9 C864.3 772.3 866.7 768.4 868.0 764.5 C869.3 760.6 869.7 755.1 869.3 751.4 C868.9 748.1 867.1 745.1 865.4 742.3 C863.6 739.4 861.5 736.5 858.9 734.4 C856.0 732.2 852.1 730.3 848.4 729.2 C844.7 728.1 839.5 728.8 836.6 727.9 C834.6 727.3 832.2 726.0 831.4 724.0 C829.9 720.3 828.2 709.6 827.5 705.7 C827.2 704.0 827.0 700.5 827.0 700.5"/>
<path d="M835.3 690.0 C835.3 690.0 846.7 699.1 851.0 701.8 C854.2 703.7 859.1 704.5 861.5 705.7 C863.0 706.4 863.9 708.0 865.4 708.8 C867.3 709.9 871.5 711.0 873.2 712.2 C874.5 713.1 875.1 714.8 875.8 716.1 C876.9 718.1 878.2 722.4 879.8 724.0 C881.0 725.2 883.5 724.3 885.0 725.3 C886.8 726.5 888.6 730.2 890.7 731.3 C892.9 732.4 896.6 732.2 898.0 731.8 C899.1 731.5 898.4 729.3 899.4 728.7 C900.7 727.7 904.6 727.2 905.9 726.1 C907.0 725.1 906.0 722.8 907.2 721.9 C908.7 720.7 913.5 720.4 915.0 719.3 C916.3 718.3 915.2 715.9 916.3 714.8 C917.9 713.4 921.4 711.7 924.2 710.9 C927.7 709.9 933.3 708.9 937.2 708.8 C940.8 708.7 944.7 709.5 947.7 710.4 C950.5 711.2 952.7 713.5 955.5 714.0 C960.8 715.0 974.7 715.3 979.1 716.1 C980.3 716.4 980.5 718.4 981.7 718.7 C983.0 719.1 986.9 718.2 986.9 718.2 C986.9 718.2 991.5 732.4 992.1 735.7 C992.3 736.7 990.7 737.4 990.8 738.3 C991.3 741.6 994.1 749.6 994.7 755.3 C995.6 763.8 996.3 781.0 996.0 789.3 C995.9 794.6 993.6 800.6 993.4 805.0 C993.3 808.5 994.2 813.5 994.7 815.4 C995.0 816.2 996.8 816.7 996.8 816.7 C996.8 816.7 994.8 819.2 994.7 820.7 C994.6 827.8 995.6 848.1 996.0 859.9 C996.4 870.3 997.6 884.0 997.4 891.2 C997.2 895.2 997.4 900.0 994.7 903.0 C991.3 906.9 980.4 911.0 976.4 914.7 C973.6 917.4 973.2 922.6 971.2 925.2 C969.5 927.4 966.1 928.0 964.7 930.4 C963.2 932.9 963.2 938.2 962.1 940.3 C961.3 941.8 959.1 942.1 958.2 943.5 C957.0 945.1 955.0 950.0 955.0 950.0 C955.0 950.0 965.9 951.6 971.2 950.8 C978.7 949.6 992.8 944.3 1000.0 943.0 C1004.7 942.1 1011.3 943.5 1014.3 943.0 C1016.0 942.6 1017.9 941.3 1018.3 939.6 C1019.1 935.6 1019.6 919.4 1019.6 919.4 C1019.6 919.4 1024.6 919.8 1026.1 919.4 C1027.2 919.2 1028.5 918.4 1028.7 917.4 C1029.4 914.0 1030.2 905.2 1030.0 899.1 C1029.8 892.5 1028.3 884.7 1027.4 878.2 C1026.6 872.0 1024.8 865.1 1024.8 859.9 C1024.8 855.4 1027.4 849.8 1027.4 846.8 C1027.4 844.8 1024.5 843.5 1024.8 841.6 C1025.2 838.1 1029.0 831.3 1030.0 825.9 C1031.1 820.2 1031.5 813.7 1031.3 807.6 C1031.1 800.2 1028.5 790.2 1028.7 781.5 C1028.9 770.6 1031.5 752.7 1032.6 742.3 C1033.4 734.4 1035.2 718.7 1035.2 718.7 C1035.2 718.7 1041.8 718.7 1041.8 718.7"/>
<path d="M1035.8 695.7 C1035.8 695.7 1034.2 698.8 1033.9 700.5 C1033.4 703.4 1032.6 713.5 1032.6 713.5 C1032.6 713.5 1039.2 715.1 1039.2 715.1"/>
<path d="M1041.8 891.2 C1041.8 891.2 1039.0 896.4 1037.9 899.1 C1035.9 903.8 1031.1 914.4 1030.0 919.4 C1029.3 922.6 1030.7 927.3 1031.3 929.1 C1031.7 930.0 1033.0 930.3 1033.9 930.4 C1035.2 930.5 1039.2 929.9 1039.2 929.9"/>
<path d="M1290.4 510.4 C1290.4 510.4 1289.1 514.9 1289.1 514.9 C1289.1 514.9 1291.1 515.2 1291.1 515.9 C1291.1 517.7 1289.2 522.2 1289.1 525.5 C1289.0 528.8 1290.6 532.8 1290.4 535.5 C1290.2 537.8 1288.1 540.2 1287.8 541.8 C1287.7 543.2 1288.8 544.3 1289.1 545.6 C1289.7 547.9 1291.4 553.2 1291.6 555.7 C1291.8 557.4 1290.1 559.0 1290.4 560.7 C1290.8 563.2 1293.6 567.2 1294.1 570.8 C1295.0 576.4 1294.1 589.4 1295.4 594.7 C1296.2 597.9 1299.0 600.3 1301.7 602.2 C1304.8 604.5 1310.2 606.3 1314.3 608.5 C1319.1 611.2 1330.6 618.1 1330.6 618.1 C1330.6 618.1 1321.8 618.6 1321.8 618.6 C1321.8 618.6 1331.1 625.9 1333.1 628.6 C1334.4 630.3 1333.9 634.9 1333.9 634.9 C1333.9 634.9 1316.8 633.7 1316.8 633.7 C1316.8 633.7 1325.6 642.1 1328.1 646.3 C1330.4 650.0 1330.9 654.6 1331.9 658.8 C1332.9 663.5 1334.4 673.9 1334.4 673.9 C1334.4 673.9 1331.7 674.6 1330.6 673.9 C1328.7 672.7 1325.3 669.2 1323.1 666.4 C1320.8 663.5 1318.7 658.6 1316.8 656.3 C1315.5 654.7 1311.7 652.6 1311.7 652.6 C1311.7 652.6 1313.9 660.0 1314.3 663.9 C1314.9 670.0 1315.5 689.0 1315.5 689.0"/>
<path d="M1283.6 544.4 C1283.6 544.4 1286.4 551.3 1287.8 553.2 C1288.9 554.5 1292.4 555.7 1292.4 555.7 C1292.4 555.7 1291.9 551.6 1291.1 550.1 C1290.4 548.8 1287.8 546.9 1287.8 546.9"/>
<path d="M1034.0 484.0 C1034.0 484.0 1038.0 482.5 1040.0 482.7 C1044.4 483.1 1054.3 485.6 1060.1 486.5 C1065.1 487.2 1071.0 486.3 1075.2 487.7 C1079.2 489.1 1083.0 491.8 1085.3 495.3 C1088.2 499.9 1091.2 508.7 1092.8 515.4 C1094.5 522.0 1094.9 529.3 1095.4 535.5 C1095.7 541.4 1094.5 548.6 1095.4 553.2 C1096.0 556.9 1099.3 559.9 1100.4 563.2 C1101.4 566.5 1100.6 570.1 1101.6 573.3 C1103.1 577.9 1106.6 585.1 1109.2 590.9 C1112.3 598.0 1120.5 616.1 1120.5 616.1 C1120.5 616.1 1116.5 619.4 1114.2 619.8 C1111.9 620.3 1109.0 619.6 1106.7 618.6 C1104.4 617.5 1102.4 615.3 1100.4 613.6 C1098.3 611.7 1094.1 607.3 1094.1 607.3 C1094.1 607.3 1091.5 616.5 1090.3 621.1 C1089.1 625.9 1088.2 631.3 1086.5 636.2 C1084.7 641.6 1080.5 648.4 1079.0 653.8 C1077.7 658.7 1076.5 665.6 1077.7 668.9 C1078.9 672.1 1083.6 672.3 1086.5 673.9 C1089.5 675.6 1092.8 677.9 1095.4 679.0 C1097.3 679.8 1101.6 680.2 1101.6 680.2 C1101.6 680.2 1099.1 691.6 1099.1 691.6"/>
<path d="M1034.0 485.2 C1034.0 485.2 1037.9 490.3 1040.0 492.8 C1044.2 497.6 1054.3 507.5 1058.9 514.2 C1062.8 519.9 1065.1 526.6 1067.7 533.0 C1070.4 540.0 1072.5 548.6 1075.2 555.7 C1077.8 562.5 1081.9 569.9 1084.0 575.8 C1085.8 580.7 1086.9 587.6 1087.8 590.9 C1088.3 592.6 1089.5 594.2 1089.3 595.9 C1089.1 598.5 1086.8 602.5 1086.3 606.0 C1085.5 611.0 1085.8 619.8 1084.8 626.1 C1083.8 632.1 1082.3 638.0 1080.3 643.7 C1078.0 650.0 1074.4 659.9 1071.5 663.9 C1069.6 666.4 1065.6 666.5 1062.6 667.6 C1059.5 668.9 1055.3 669.1 1052.6 671.4 C1048.8 674.6 1040.0 686.5 1040.0 686.5"/>
<path d="M1148.2 478.2 C1148.2 478.2 1157.4 481.3 1160.8 484.0 C1164.1 486.6 1166.9 490.7 1168.3 494.0 C1169.7 497.1 1170.4 500.8 1169.6 504.1 C1168.7 507.5 1166.2 511.6 1163.3 514.2 C1160.4 516.7 1154.1 517.7 1152.0 519.2 C1150.9 520.0 1150.3 521.7 1150.7 523.0 C1151.8 526.1 1155.7 533.0 1158.3 538.1 C1161.2 543.9 1165.2 552.3 1168.3 558.2 C1171.1 563.3 1175.2 567.8 1177.1 573.3 C1179.0 578.7 1179.8 585.0 1179.6 590.9 C1179.4 597.2 1177.3 605.2 1175.9 611.0 C1174.6 616.2 1172.6 621.1 1170.8 626.1 C1169.0 631.6 1164.6 643.7 1164.6 643.7 C1164.6 643.7 1162.5 638.8 1162.0 636.2 C1161.0 630.7 1159.3 618.6 1158.3 611.0 C1157.3 604.3 1156.8 596.8 1155.7 590.9 C1154.8 585.8 1153.6 580.7 1152.0 575.8 C1150.1 569.9 1146.7 561.6 1144.4 555.7 C1142.4 550.6 1139.4 545.6 1138.1 540.6 C1136.9 535.7 1136.5 530.5 1136.9 525.5 C1137.3 520.0 1139.2 513.7 1140.6 507.9 C1142.5 500.0 1148.2 478.2 1148.2 478.2"/>
<path d="M1216.1 601.0 C1217.3 599.7 1221.2 602.2 1221.2 602.2 C1221.2 602.2 1214.5 619.2 1213.6 626.1 C1212.9 632.0 1216.6 640.5 1216.1 643.7 C1215.9 645.5 1212.9 645.8 1211.1 645.8 C1208.6 645.8 1204.0 644.5 1201.0 643.7 C1198.5 643.1 1193.5 641.2 1193.5 641.2 C1193.5 641.2 1194.7 636.0 1196.0 633.7 C1198.1 629.9 1202.9 623.7 1206.1 618.6 C1209.4 613.1 1213.6 603.7 1216.1 601.0"/>
<path d="M1164.6 666.4 C1167.1 663.0 1175.1 659.0 1180.9 656.3 C1187.4 653.4 1199.1 649.6 1203.6 648.8 C1205.0 648.5 1206.5 650.0 1207.3 651.3 C1208.6 653.4 1211.1 661.4 1211.1 661.4 C1211.1 661.4 1206.7 661.0 1206.1 662.6 C1205.0 665.1 1205.6 671.9 1204.8 676.5 C1204.0 681.1 1203.2 686.0 1201.0 690.3 C1198.7 694.9 1193.1 701.4 1191.0 704.1 C1190.2 705.1 1189.5 706.0 1188.5 706.6 C1187.4 707.3 1185.8 708.6 1184.7 707.9 C1182.8 706.6 1179.5 702.2 1177.1 699.1 C1174.4 695.5 1170.2 690.3 1168.3 686.5 C1166.8 683.4 1166.4 679.8 1165.8 676.5 C1165.2 673.1 1162.5 669.1 1164.6 666.4"/>
<path d="M1040.0 714.8 C1040.0 714.8 1047.0 716.0 1050.5 715.6 C1054.8 715.2 1061.1 713.9 1066.1 712.2 C1071.8 710.3 1079.2 707.9 1084.4 704.4 C1089.6 701.0 1095.1 693.7 1097.5 691.3 C1097.9 690.9 1098.8 690.0 1098.8 690.0"/>
<path d="M1040.0 718.2 C1040.0 718.2 1047.0 719.8 1050.5 719.3 C1056.1 718.5 1074.0 713.5 1074.0 713.5 C1074.0 713.5 1075.5 729.0 1076.6 733.1 C1077.1 735.2 1079.6 736.4 1080.5 738.4 C1081.6 740.8 1082.8 744.4 1083.1 747.5 C1083.9 753.8 1084.3 766.9 1085.0 776.3 C1085.6 785.4 1087.6 796.7 1087.1 803.7 C1086.7 808.8 1083.1 814.6 1081.8 818.1 C1081.0 820.3 1079.9 822.4 1079.2 824.6 C1078.1 828.1 1077.3 834.4 1075.3 839.0 C1073.1 844.0 1068.1 850.8 1066.1 854.7 C1064.9 857.1 1064.8 860.3 1063.5 862.5 C1062.3 864.6 1059.4 865.5 1058.3 867.7 C1057.0 870.4 1057.0 875.2 1055.7 878.2 C1054.4 881.1 1052.8 883.9 1050.5 886.0 C1047.8 888.4 1040.0 892.6 1040.0 892.6"/>
<path d="M1122.3 725.3 C1122.3 725.3 1125.0 725.3 1125.0 725.3 C1125.0 725.3 1125.4 731.6 1126.3 734.4 C1127.1 737.2 1128.0 740.3 1130.2 742.3 C1132.4 744.2 1136.1 746.0 1139.3 746.2 C1142.6 746.4 1146.7 745.3 1149.8 743.6 C1153.3 741.6 1157.2 736.6 1160.2 734.4 C1162.6 732.7 1165.5 731.4 1168.1 730.5 C1170.6 729.7 1175.9 729.2 1175.9 729.2 C1175.9 729.2 1170.9 732.0 1170.7 734.4 C1170.5 737.3 1173.3 744.0 1174.6 746.2 C1175.3 747.4 1177.7 746.4 1178.5 747.5 C1179.4 748.6 1179.2 751.9 1179.8 752.7 C1180.4 753.4 1182.5 752.7 1182.5 752.7 C1182.5 752.7 1183.2 757.4 1183.2 757.4 C1183.2 757.4 1189.0 757.4 1189.0 757.4 C1189.0 757.4 1188.3 753.8 1189.5 752.7 C1190.8 751.6 1194.4 751.2 1196.8 750.6 C1199.8 750.0 1203.8 749.4 1207.3 748.8 C1210.8 748.2 1214.7 747.0 1217.7 747.0 C1220.4 747.0 1223.8 748.0 1225.6 748.8 C1226.8 749.4 1226.9 751.5 1228.2 751.9 C1229.9 752.5 1236.0 752.2 1236.0 752.2 C1236.0 752.2 1237.3 764.5 1237.3 764.5 C1237.3 764.5 1263.5 751.9 1263.5 751.9 C1263.5 751.9 1264.3 761.9 1264.3 761.9 C1264.3 761.9 1267.8 761.6 1268.7 761.9 C1269.4 762.1 1270.0 763.7 1270.0 763.7 C1270.0 763.7 1271.7 762.4 1272.6 761.9 C1273.7 761.3 1276.6 760.1 1276.6 760.1 C1276.6 760.1 1276.8 768.8 1277.9 771.0 C1278.7 772.8 1281.9 772.1 1283.1 773.6 C1284.4 775.4 1284.0 779.3 1285.7 781.5 C1287.9 784.3 1293.8 786.7 1296.2 790.6 C1298.8 795.0 1300.1 804.8 1301.4 807.6 C1301.8 808.4 1304.0 807.6 1304.0 807.6 C1304.0 807.6 1304.0 818.5 1305.3 823.3 C1306.6 828.0 1310.5 833.3 1311.8 836.4 C1312.6 838.0 1312.9 839.8 1313.2 841.6 C1313.8 846.8 1314.2 862.1 1315.8 867.7 C1316.7 871.0 1319.9 873.2 1322.3 875.6 C1325.1 878.4 1330.6 882.3 1332.8 884.7 C1334.1 886.2 1333.8 888.8 1335.4 890.0 C1337.1 891.3 1341.3 891.9 1343.2 892.6 C1344.5 893.0 1345.8 893.5 1347.1 893.9 C1348.9 894.3 1351.5 895.4 1353.7 895.2 C1356.5 895.0 1361.1 894.1 1364.1 892.6 C1367.2 891.1 1370.3 889.0 1372.0 886.0 C1373.8 882.8 1375.1 877.1 1375.1 873.0 C1375.1 868.9 1373.6 864.0 1372.0 861.2 C1370.6 858.8 1367.2 857.1 1365.4 856.0 C1364.3 855.3 1362.7 855.4 1361.5 854.7 C1360.2 853.8 1359.1 851.5 1357.6 850.8 C1356.1 850.0 1353.4 850.8 1352.4 850.0 C1351.3 849.1 1351.9 846.8 1351.1 845.5 C1350.2 844.1 1348.4 843.0 1347.1 841.6 C1345.4 839.6 1342.3 836.7 1340.6 833.8 C1337.3 828.1 1330.8 815.0 1327.5 807.6 C1324.9 801.7 1322.1 794.6 1321.0 789.3 C1320.1 785.1 1321.5 780.6 1321.0 776.3 C1320.3 770.6 1318.2 761.4 1317.1 755.3 C1316.1 750.1 1315.5 744.2 1314.5 739.7 C1313.5 735.6 1310.5 732.0 1310.5 727.9 C1310.5 723.5 1313.8 718.4 1314.5 713.5 C1315.3 707.2 1315.8 690.0 1315.8 690.0"/>
<path d="M1122.3 725.3 C1122.3 725.3 1123.3 736.6 1123.6 742.3 C1124.1 748.6 1124.3 757.5 1125.0 763.2 C1125.5 767.6 1127.3 773.4 1127.6 776.3 C1127.7 777.6 1126.1 778.9 1126.3 780.2 C1126.4 781.5 1128.8 782.7 1128.3 784.1 C1127.5 786.9 1122.7 792.5 1121.0 797.2 C1119.4 802.0 1120.2 809.4 1118.4 812.9 C1117.0 815.7 1112.4 815.5 1110.6 818.1 C1108.4 821.1 1106.7 827.9 1105.3 831.2 C1104.5 833.3 1103.6 836.4 1102.7 837.7 C1102.2 838.5 1100.4 838.1 1100.1 839.0 C1099.3 841.4 1099.1 848.1 1098.0 852.1 C1097.0 855.7 1095.0 859.0 1093.6 862.5 C1092.2 866.0 1090.1 869.3 1089.7 873.0 C1089.1 877.3 1089.3 885.0 1090.2 888.7 C1090.8 891.3 1094.3 893.0 1094.9 895.2 C1095.5 897.3 1094.9 899.9 1093.6 901.7 C1091.8 904.1 1086.8 907.0 1084.4 909.6 C1082.3 911.9 1080.3 914.6 1079.2 917.4 C1078.1 920.2 1079.0 924.5 1077.9 926.6 C1076.9 928.4 1074.7 929.8 1072.7 930.0 C1069.4 930.2 1063.1 927.8 1058.3 927.9 C1052.9 928.0 1040.0 930.5 1040.0 930.5"/>
<path d="M1185.0 290.0 C1185.0 290.0 1186.5 298.3 1186.0 301.7 C1185.7 304.8 1183.1 307.9 1182.4 310.2 C1181.9 311.9 1181.7 313.8 1181.8 315.6 C1181.9 319.3 1183.0 327.3 1182.8 332.6 C1182.7 337.6 1181.7 343.2 1181.1 347.5 C1180.7 351.0 1180.0 354.8 1179.7 358.1 C1179.3 361.3 1179.5 365.4 1179.0 367.7 C1178.6 369.3 1176.5 372.0 1176.5 372.0 C1176.5 372.0 1174.3 369.8 1174.3 369.8 C1174.3 369.8 1171.5 376.2 1170.1 379.4 C1168.7 382.6 1166.9 386.0 1165.8 389.0 C1164.8 391.8 1165.5 395.4 1163.7 397.5 C1161.9 399.7 1157.1 400.4 1155.2 401.8 C1153.7 402.8 1152.6 404.4 1152.0 406.0 C1151.3 408.0 1150.8 411.0 1150.9 413.5 C1151.1 416.9 1152.2 422.4 1153.0 426.3 C1153.9 429.9 1155.2 433.7 1156.2 436.9 C1157.1 439.8 1158.8 442.8 1159.0 445.4 C1159.2 448.0 1158.5 451.5 1157.3 452.9 C1156.1 454.2 1152.0 453.5 1152.0 453.5 C1152.0 453.5 1151.5 458.0 1153.0 459.3 C1154.6 460.6 1158.6 461.1 1161.6 461.4 C1165.1 461.8 1170.1 461.6 1174.3 461.4 C1179.7 461.1 1187.8 459.8 1193.5 459.9 C1198.5 460.0 1203.5 460.8 1208.4 462.0 C1213.4 463.3 1218.9 465.8 1223.3 467.8 C1227.3 469.6 1231.8 472.0 1235.0 474.2 C1237.8 476.1 1240.2 480.1 1242.5 481.0 C1244.5 481.8 1247.1 479.2 1248.9 479.5 C1250.6 479.8 1251.3 482.7 1253.1 482.7 C1255.2 482.6 1258.8 478.9 1261.6 479.1 C1264.5 479.2 1268.0 482.7 1270.1 483.8 C1271.5 484.4 1273.3 484.4 1274.4 485.5 C1276.2 487.1 1280.8 493.3 1280.8 493.3 C1280.8 493.3 1277.6 494.4 1277.6 494.4 C1277.6 494.4 1283.4 496.0 1285.0 498.2 C1287.0 500.8 1289.3 509.9 1289.3 509.9"/>
<path d="M1127.5 298.1 C1127.5 298.1 1136.4 296.8 1136.4 296.8 C1136.4 296.8 1136.0 317.3 1136.0 317.3 C1136.0 317.3 1134.2 310.2 1132.8 307.0 C1131.4 303.9 1127.5 298.1 1127.5 298.1"/>
<path d="M1142.4 306.0 C1142.5 305.6 1143.5 305.3 1143.5 305.3 C1143.5 305.3 1148.8 311.9 1150.9 315.6 C1153.9 320.6 1161.6 335.8 1161.6 335.8 C1161.6 335.8 1157.0 332.5 1155.2 330.5 C1152.5 327.4 1147.7 321.1 1145.6 317.7 C1144.1 315.4 1142.9 312.2 1142.4 310.2 C1142.0 308.9 1142.2 306.8 1142.4 306.0"/>
<path d="M1089.6 330.9 C1090.2 329.9 1091.8 327.7 1093.4 327.9 C1095.7 328.2 1099.9 330.8 1103.0 332.6 C1106.7 334.8 1112.4 339.0 1115.8 341.1 C1118.2 342.6 1123.2 345.4 1123.2 345.4 C1123.2 345.4 1119.6 345.4 1117.9 344.9 C1114.7 344.0 1108.6 341.8 1104.1 340.0 C1099.3 338.2 1092.0 335.2 1089.6 333.6 C1088.8 333.2 1089.1 331.6 1089.6 330.9"/>
<path d="M1106.6 328.8 C1106.6 328.8 1110.7 328.8 1112.6 329.4 C1115.2 330.2 1119.5 332.5 1122.2 333.6 C1124.3 334.6 1128.6 336.4 1128.6 336.4 C1128.6 336.4 1127.3 331.9 1126.4 330.0 C1125.6 328.3 1123.2 325.1 1123.2 325.1 C1123.2 325.1 1127.0 324.0 1128.6 324.5 C1130.1 325.0 1132.3 326.2 1132.8 327.9 C1133.7 331.0 1133.7 338.1 1133.9 343.2 C1134.1 349.0 1134.2 358.2 1133.9 362.4 C1133.7 364.5 1131.7 368.4 1131.7 368.4 C1131.7 368.4 1130.5 365.9 1130.3 364.5 C1129.9 362.8 1130.4 359.5 1129.6 358.1 C1128.8 356.8 1126.9 356.7 1125.4 356.4 C1122.2 355.9 1115.1 355.5 1110.5 354.9 C1106.2 354.4 1097.7 352.8 1097.7 352.8 C1097.7 352.8 1098.8 350.8 1099.8 350.7 C1102.3 350.4 1108.3 350.7 1112.6 351.1 C1117.4 351.5 1128.6 353.2 1128.6 353.2 C1128.6 353.2 1130.2 344.7 1129.0 342.2 C1127.7 339.6 1123.7 339.3 1121.1 337.9 C1118.4 336.5 1115.0 335.2 1112.6 333.6 C1110.4 332.3 1106.6 328.8 1106.6 328.8"/>
<path d="M1152.6 367.1 C1152.6 367.1 1157.6 369.2 1159.4 370.9 C1161.3 372.6 1162.7 375.5 1163.7 377.3 C1164.4 378.6 1165.4 381.6 1165.4 381.6 C1165.4 381.6 1162.1 378.8 1160.5 377.3 C1158.8 375.7 1156.5 373.7 1155.2 372.0 C1154.0 370.5 1152.6 367.1 1152.6 367.1"/>
<path d="M947.8 339.4 C947.8 339.4 935.5 349.4 935.5 349.4 C935.5 349.4 941.2 351.5 944.2 352.1 C947.3 352.8 950.6 353.1 953.9 353.3 C957.9 353.5 964.4 354.0 968.4 353.3 C971.7 352.8 977.6 349.4 977.6 349.4 C977.6 349.4 975.1 353.3 973.2 354.5 C970.9 355.9 966.8 357.3 963.6 357.9 C960.4 358.5 956.7 358.6 953.9 358.2 C951.3 357.8 949.0 356.4 946.6 355.5 C943.8 354.5 939.5 352.8 936.9 352.1 C935.0 351.6 931.1 351.2 931.1 351.2 C931.1 351.2 940.8 361.5 940.8 361.5 C940.8 361.5 938.1 359.0 936.5 358.2 C934.6 357.3 929.4 356.2 929.4 356.2 C929.4 356.2 946.1 376.5 946.1 376.5"/>
</g></g></svg><!--/DRAW-->
<!-- toolbar -->
<div class="a" style="left:18px;top:104px;width:40px;height:835px;background:#4a4a4a;border:1px solid #2a2a2a;border-radius:4px 4px 0 0"></div>
<div class="a" style="left:19px;top:105px;width:38px;height:12px;background:#333;border-radius:3px 3px 0 0;border-bottom:1px solid #262626"></div>
<svg class="a" style="left:28px;top:109px" width="8" height="6"><path d="M0 0L3 3L0 6Z M4 0L7 3L4 6Z" fill="#ccc"/></svg>
<svg class="a" style="left:45px;top:108px" width="8" height="7"><path d="M1 1L7 6M7 1L1 6" stroke="#ddd" stroke-width="1.6"/></svg>
<div class="a" style="left:27px;top:122px;width:20px;height:3px;background:repeating-linear-gradient(90deg,#111 0 1px,transparent 1px 2px)"></div>
<div class="a" style="left:24px;top:159px;width:28px;height:22px;background:#383838;border:1px solid #2e2e2e"></div>
<div class="a" style="left:23px;top:231px;width:30px;height:1px;background:#3a3a3a"></div>
<div class="a" style="left:23px;top:425px;width:30px;height:1px;background:#3a3a3a"></div>
<div class="a" style="left:23px;top:570px;width:30px;height:1px;background:#3a3a3a"></div>
<div class="a" style="left:23px;top:668px;width:30px;height:1px;background:#3a3a3a"></div>
<div class="a" style="left:23px;top:718px;width:30px;height:1px;background:#3a3a3a"></div>
<div class="a" style="left:23px;top:816px;width:30px;height:1px;background:#3a3a3a"></div>

<svg class="a" style="left:0;top:0" width="70" height="950" viewBox="0 0 70 950">
<g fill="none" stroke="#cfcfcf" stroke-width="1.2">
<!-- selection -->
<path d="M33.5 137 L33.5 152 L37 148.5 L40 154.5 L42.5 153 L39.5 147.5 L44 147 Z" fill="#222" stroke="#d8d8d8"/>
<!-- direct selection -->
<path d="M34 162 L34 175 L37 172 L40 177.5 L42 176.5 L39.5 171 L43.5 170.5 Z" fill="#b5b5b5" stroke="#b5b5b5"/>
<!-- magic wand -->
<path d="M37 193 L46 202" stroke-width="2"/>
<path d="M36 185 L37.5 190 L42 187.5 L39.5 192 L44 193.5 L39.5 195 L41 199 L37 196.5 L34 200 L34.5 195.5 L29.5 194 L34 192 L31 187.5 L35.5 190 Z" fill="#cfcfcf" stroke="none"/>
<!-- lasso -->
<ellipse cx="38" cy="215" rx="7.5" ry="4" />
<path d="M31 217 Q31 222 34 222 Q36 222 34 226" />
<path d="M37 212 L37 226 L40 222 L47 221 Z" fill="#cfcfcf" stroke="none"/>
<!-- pen -->
<path d="M31 252 L33 244 L40 238 L44 242 L38 249 Z" fill="#bdbdbd" stroke="#cfcfcf" stroke-width="0.8"/>
<path d="M41 237 L44 235 L47 238 L45 241 Z" fill="#cfcfcf" stroke="none"/>
<circle cx="37" cy="245" r="1.2" fill="#222" stroke="none"/>
<path d="M31 252 L36.5 245.5" stroke="#333" stroke-width="0.7"/>
<!-- type -->
<path d="M32 261 L44 261 M38 261 L38 276 M35 276 L41 276 M32.5 261 L32.5 264 M43.5 261 L43.5 264" stroke-width="1.6"/>
<!-- line -->
<path d="M31 299 L44 285" stroke-width="1.3"/>
<!-- rect -->
<rect x="31.5" y="310.5" width="13.5" height="11.5" fill="#707070" stroke="#cfcfcf"/>
<!-- brush -->
<path d="M29 346 Q33 343 36 341 Q38 344 35 346 Z" fill="#cfcfcf" stroke="none"/>
<path d="M36 342 L46 332" stroke-width="2.2" stroke-linecap="round"/>
<!-- pencil -->
<path d="M31 371 L32.5 366 L43 356.5 L46 359.5 L36 369.5 Z" fill="#909090" stroke="#cfcfcf" stroke-width="1"/>
<!-- blob brush -->
<path d="M30 383 L38 383 L40 380 L46 379 L46 390 L42 394 L30 394 Z" fill="#a8a8a8" stroke="none"/>
<path d="M34 389 Q38 388 40 385 L47 379" stroke="#333" stroke-width="1.5"/>
<!-- eraser -->
<path d="M30.5 413 L38 406 L47 405 L46.5 410 L38 418 L30.5 418 Z" fill="#a8a8a8" stroke="#cfcfcf" stroke-width="0.8"/>
<path d="M30.5 413 L38 413 L46.5 405" stroke="#555" stroke-width="0.8"/>
<!-- rotate -->
<path d="M34 432 A7 7 0 1 1 31 440" stroke-dasharray="2 1.5" stroke-width="1.6"/>
<path d="M30.5 431 L35 429 L35 434 Z" fill="#cfcfcf" stroke="none"/>
<!-- scale -->
<rect x="29.5" y="461.5" width="8" height="7" />
<rect x="33.5" y="455.5" width="12" height="9" fill="#666"/>
<path d="M38 462 L43 457 M40 457 L43 457 L43 460" />
<!-- warp -->
<path d="M32 482 Q35 478 38 484 Q41 480 44 482 L46 489 Q40 491 36 489 Q32 487 32 482 Z" fill="#a8a8a8" stroke="none"/>
<path d="M30 492 L40 482" stroke-width="0.9"/>
<circle cx="30" cy="492" r="1.6" fill="#4a4a4a"/><circle cx="35" cy="487" r="1.9" fill="#4a4a4a"/><circle cx="40" cy="481.5" r="1.4" fill="#4a4a4a"/>
<!-- free transform -->
<rect x="34.5" y="504.5" width="11" height="10" stroke-dasharray="1.5 1.5"/>
<path d="M30 503 L30 515 L33 512 L37 512 Z" fill="#cfcfcf" stroke="none"/>
<!-- shape builder -->
<circle cx="34" cy="532" r="5" fill="#777"/>
<circle cx="39" cy="531" r="5.5" fill="#666"/>
<path d="M29 532 L40 532" stroke-dasharray="1 1" stroke="#fff"/>
<path d="M41 530 L41 543 L44 540 L48 540 Z" fill="#cfcfcf" stroke="none"/>
<!-- perspective grid -->
<path d="M30.5 551 L30.5 566 L47 566 M30.5 551 L36 554 L36 566 M36 556 L41 558 L41 566 M30.5 556 L41 560 M30.5 561 L47 563" stroke-width="1.4" fill="#888"/>
<!-- mesh -->
<rect x="30.5" y="578.5" width="15.5" height="11" />
<path d="M31 584 Q36 580 40 584 Q43 587 46 583 M36 579 Q34 584 37 589 M41 579 Q39 584 42 589" stroke-width="0.9"/>
<!-- gradient -->
<defs><linearGradient id="gr"><stop offset="0" stop-color="#333"/><stop offset="1" stop-color="#ddd"/></linearGradient>
<linearGradient id="gr2"><stop offset="0" stop-color="#fff"/><stop offset="1" stop-color="#000"/></linearGradient></defs>
<rect x="30.5" y="602.5" width="15.5" height="11" fill="url(#gr)"/>
<!-- eyedropper -->
<path d="M31.5 638.5 L40 630 L42.5 632.5 L34 641 Z" fill="none" stroke-width="1"/>
<path d="M39 628 L42 625 Q45 623 46 626 Q47 628 45 630 L42 633 Z" fill="#cfcfcf" stroke="none"/>
<!-- blend -->
<rect x="29" y="647.5" width="9" height="8" fill="#999" stroke="none"/>
<circle cx="37" cy="655" r="4.5" fill="#777"/>
<circle cx="41" cy="658" r="4.5" fill="#555"/>
<!-- symbol sprayer -->
<path d="M28 675 h1 M30 675 h1 M32 675 h1 M34 675 h1 M29 677 h1 M31 677 h1 M33 677 h1 M28 679 h1 M30 679 h1 M32 679 h1" stroke-width="1"/>
<rect x="36.5" y="678.5" width="9" height="11" />
<rect x="38.5" y="674" width="5" height="3" fill="#cfcfcf" stroke="none"/>
<circle cx="41" cy="684" r="2" stroke-width="1.4"/>
<!-- column graph -->
<path d="M30.5 698 L30.5 712 L46 712" stroke-width="1"/>
<rect x="32.5" y="704.5" width="3" height="7" fill="#888"/><rect x="37.5" y="701.5" width="3" height="10" fill="#888"/><rect x="42.5" y="703.5" width="3" height="8" fill="#888"/>
<!-- artboard -->
<rect x="32.5" y="726.5" width="12" height="10" fill="#777"/>
<path d="M28 727 L48 727 M28 736 L48 736 M33 723 L33 741 M44 723 L44 741" stroke-width="0.9"/>
<!-- slice -->
<path d="M30 763 L40 752 L48 749 L44 756 L35 761 Z" fill="#a8a8a8" stroke="none"/>
<!-- hand -->
<path d="M32 778 L32 773 Q33 771 34 773 L34 777 L35 772 Q36 770 37 772 L37 777 L38 772 Q39 770.5 40 772 L40 777 L41 774 Q42 772 43 774 L43 781 Q46 779 46 781 L42 787 L35 787 Q31 782 29.5 779 Q30 777 32 778 Z" fill="#bdbdbd" stroke="none"/>
<!-- zoom -->
<circle cx="37" cy="801" r="5" fill="#777" stroke-width="1.6"/>
<path d="M40.5 804.5 L46 810" stroke-width="2.4" stroke-linecap="round"/>
<!-- small corner triangles -->
</g>
<g fill="#d8d8d8">
<path d="M48 179 L51 179 L51 176 Z"/><path d="M48 254 L51 254 L51 251 Z"/><path d="M48 278 L51 278 L51 275 Z"/><path d="M48 302 L51 302 L51 299 Z"/><path d="M48 326 L51 326 L51 323 Z"/><path d="M48 374 L51 374 L51 371 Z"/><path d="M48 420 L51 420 L51 417 Z"/><path d="M48 447 L51 447 L51 444 Z"/><path d="M48 471 L51 471 L51 468 Z"/><path d="M48 495 L51 495 L51 492 Z"/><path d="M48 544 L51 544 L51 541 Z"/><path d="M48 568 L51 568 L51 565 Z"/><path d="M48 641 L51 641 L51 638 Z"/><path d="M48 691 L51 691 L51 688 Z"/><path d="M48 714 L51 714 L51 711 Z"/><path d="M48 765 L51 765 L51 762 Z"/><path d="M48 789 L51 789 L51 786 Z"/>
</g>
<!-- default colors -->
<rect x="27.5" y="824.5" width="7" height="7" fill="#000" stroke="#aaa"/>
<rect x="24.5" y="821.5" width="6" height="6" fill="#ddd" stroke="#222"/>
<path d="M45 823 Q50 822 51 828 M43.5 823 L46 821 M43.5 823 L46 825 M51 829 L49 827 M51 829 L53 827" stroke="#cfcfcf" stroke-width="1.1" fill="none"/>
<!-- stroke swatch -->
<rect x="33.5" y="848.5" width="18.5" height="18.5" fill="#000" stroke="#ddd"/>
<rect x="37" y="852" width="11.5" height="11.5" fill="none" stroke="#fff" stroke-width="1"/>
<rect x="39.5" y="854.5" width="6.5" height="6.5" fill="#4a4a4a"/>
<!-- fill swatch -->
<rect x="23.5" y="838.5" width="18.5" height="18.5" fill="#fff" stroke="#333"/>
<path d="M24.5 856.5 L41.5 839" stroke="#f00" stroke-width="1.6"/>
<!-- mode buttons -->
<rect x="24.5" y="875.5" width="8.5" height="8" fill="#fff" stroke="#333"/>
<rect x="33.5" y="875.5" width="9" height="8" fill="url(#gr2)" stroke="#333"/>
<rect x="43" y="875.5" width="8.5" height="8" fill="#fff" stroke="#333"/>
<path d="M43.5 883.5 L51.5 876" stroke="#f00" stroke-width="1.4"/>
<!-- draw mode -->
<circle cx="37" cy="897" r="3.5" fill="none" stroke="#aaa" stroke-width="1.2"/>
<rect x="37" y="897" width="6" height="6" fill="#aaa"/>
<!-- screen mode -->
<rect x="29.5" y="919.5" width="11" height="9" fill="#666" stroke="#ccc"/>
<rect x="34.5" y="915.5" width="11.5" height="9" fill="#666" stroke="#ccc"/>
</svg>

<!-- right dock -->
<div class="a" style="left:1689px;top:66px;width:228px;height:964px;background:#262626"></div>
<div class="a" style="left:1689px;top:66px;width:228px;height:12px;background:#2f2f2f;border-top:1px solid #3a3a3a"></div>
<svg class="a" style="left:1907px;top:69px" width="9" height="7"><path d="M0 0L3.5 3.5L0 7Z M4.5 0L8 3.5L4.5 7Z" fill="#ccc"/></svg>
<div class="a" style="left:1689px;top:78px;width:228px;height:17px;background:#383838;border-top:1px solid #2a2a2a"></div>
<div class="a" style="left:1689px;top:79px;width:40px;height:16px;background:#4a4a4a;border-right:1px solid #2e2e2e;border-top:1px solid #5a5a5a"></div>
<div class="a" style="left:1729px;top:79px;width:61px;height:16px;background:#383838;border-right:1px solid #2e2e2e"></div>
<div class="t" style="transform:scaleX(0.868);transform-origin:0 0;left:1703px;top:83px;font-size:10.5px;font-weight:bold;color:#e6e6e6">Färg</div>
<div class="t" style="transform:scaleX(0.929);transform-origin:0 0;left:1736px;top:83px;font-size:10.5px;font-weight:bold;color:#a6a6a6">Färgguide</div>
<svg class="a" style="left:1694px;top:81px" width="8" height="12"><path d="M0.8 4.5L3.3 1.8L5.8 4.5 M0.8 7.5L3.3 10.2L5.8 7.5" stroke="#ddd" stroke-width="1.1" fill="none"/></svg>
<svg class="a" style="left:1900px;top:83px" width="16" height="9"><path d="M0 2 L4 2 L2 4.5Z" fill="#ddd"/><path d="M5 0.5h10M5 3h10M5 5.5h10M5 8h10" stroke="#ddd" stroke-width="1"/></svg>
<div class="a" style="left:1689px;top:95px;width:228px;height:205px;background:#4a4a4a"></div>

<div class="a" style="left:1694px;top:104px;width:40px;height:14px;background:#222"></div>
<div class="a" style="left:1695px;top:105px;width:13px;height:12px;background:#fff"></div>
<svg class="a" style="left:1695px;top:105px" width="13" height="12"><path d="M0.5 11.5L12.5 0.5" stroke="#f00" stroke-width="1.6"/></svg>
<div class="a" style="left:1708px;top:105px;width:13px;height:12px;background:#000"></div>
<div class="a" style="left:1721px;top:105px;width:12px;height:12px;background:#fff"></div>
<div class="a" style="left:1695px;top:128px;width:207px;height:166px;background:#111;border:1px solid #222"></div>
<div class="a" style="left:1696px;top:129px;width:205px;height:164px;background:linear-gradient(to bottom,rgba(255,255,255,1) 0%,rgba(255,255,255,0.75) 12%,rgba(255,255,255,0.35) 28%,rgba(255,255,255,0) 45%,rgba(0,0,0,0) 58%,rgba(0,0,0,0.3) 74%,rgba(0,0,0,0.72) 88%,rgba(0,0,0,1) 98%),linear-gradient(to right,#ff0a0a 0%,#ff8a10 9%,#f8f520 17%,#80c828 27%,#1a9a3a 37%,#20a0a0 48%,#22a8d8 56%,#1e5cb0 64%,#1a0a88 71%,#7a1090 78%,#e8108a 86%,#ff0a0a 100%)"></div>
<svg class="a" style="left:1903px;top:285px" width="12" height="12"><g fill="#777"><rect x="10" y="2" width="1" height="1"/><rect x="8" y="4" width="1" height="1"/><rect x="10" y="4" width="1" height="1"/><rect x="6" y="6" width="1" height="1"/><rect x="8" y="6" width="1" height="1"/><rect x="10" y="6" width="1" height="1"/><rect x="4" y="8" width="1" height="1"/><rect x="6" y="8" width="1" height="1"/><rect x="8" y="8" width="1" height="1"/><rect x="10" y="8" width="1" height="1"/></g></svg>
<div class="a" style="left:1689px;top:302px;width:228px;height:18px;background:#383838;border-top:1px solid #2a2a2a"></div>
<div class="a" style="left:1689px;top:303px;width:59px;height:17px;background:#4a4a4a;border-right:1px solid #2e2e2e;border-top:1px solid #5a5a5a"></div>
<div class="a" style="left:1748px;top:303px;width:49px;height:17px;background:#383838;border-right:1px solid #2e2e2e"></div>
<div class="a" style="left:1797px;top:303px;width:59px;height:17px;background:#383838;border-right:1px solid #2e2e2e"></div>
<div class="t" style="transform:scaleX(0.947);transform-origin:0 0;left:1696px;top:307px;font-size:10.5px;font-weight:bold;color:#e6e6e6">Färgrutor</div>
<div class="t" style="transform:scaleX(0.863);transform-origin:0 0;left:1755px;top:307px;font-size:10.5px;font-weight:bold;color:#a6a6a6">Penslar</div>
<div class="t" style="transform:scaleX(0.946);transform-origin:0 0;left:1804px;top:307px;font-size:10.5px;font-weight:bold;color:#a6a6a6">Symboler</div>
<svg class="a" style="left:1900px;top:307px" width="16" height="9"><path d="M0 2 L4 2 L2 4.5Z" fill="#ddd"/><path d="M5 0.5h10M5 3h10M5 5.5h10M5 8h10" stroke="#ddd" stroke-width="1"/></svg>
<div class="a" style="left:1689px;top:320px;width:228px;height:206px;background:#4a4a4a"></div>

<div class="a" style="left:1694px;top:326px;width:220px;height:180px;background:#4a4a4a;border:1px solid #2e2e2e"></div>
<div class="a" style="left:1901px;top:327px;width:12px;height:178px;background:#3a3a3a"></div>
<div class="a" style="left:1903px;top:332px;width:0;height:0;border-left:4px solid transparent;border-right:4px solid transparent;border-bottom:5px solid #777"></div>
<div class="a" style="left:1903px;top:496px;width:0;height:0;border-left:4px solid transparent;border-right:4px solid transparent;border-top:5px solid #777"></div>
<div class="a" style="left:1695px;top:327px;width:13px;height:13px;background:#fff;border:1px solid #222"></div>
<svg class="a" style="left:1696px;top:328px" width="11" height="11"><path d="M0.5 10.5L10.5 0.5" stroke="#f00" stroke-width="1.6"/></svg>
<div class="a" style="left:1708px;top:327px;width:14px;height:14px;background:#ddd"></div>
<svg class="a" style="left:1708px;top:327px" width="14" height="14"><circle cx="7" cy="7" r="4.5" fill="none" stroke="#111" stroke-width="1"/><circle cx="7" cy="7" r="1.5" fill="none" stroke="#111" stroke-width="0.8"/><path d="M7 0V14M0 7H14" stroke="#111" stroke-width="0.8"/></svg>
<svg class="a" style="left:1694px;top:508px" width="220" height="16"><g fill="#cfcfcf"><rect x="4" y="2" width="2" height="9"/><rect x="7" y="2" width="2" height="9"/><path d="M10 2 L12 2 L15 11 L13 11Z"/><path d="M15 9 L20 9 L17.5 11.5Z"/>
<g transform="translate(82,2)"><rect x="0" y="0" width="10" height="10" fill="#ddd"/><g fill="#333"><rect x="1" y="1" width="2" height="2"/><rect x="4" y="1" width="2" height="2"/><rect x="7" y="4" width="2" height="2"/><rect x="1" y="7" width="2" height="2"/><rect x="4" y="7" width="2" height="2"/></g><path d="M11 8L16 8L13.5 10.5Z" fill="#ddd"/></g>
<rect x="109" y="2.5" width="10" height="9" fill="none" stroke="#666"/>
<path d="M134 3 L139 3 L140 5 L146 5 L146 12 L134 12Z" fill="#d0d0d0"/>
<path d="M161 4 L170 4 L170 13 L164 13 L164 9 L160 9Z" fill="#666"/>
<path d="M184 5h12M186 5l1 8h8l1-8M188 3h6" stroke="#666" fill="none"/>
</g></svg>
<div class="a" style="left:1689px;top:527px;width:228px;height:17px;background:#383838;border-top:1px solid #2a2a2a"></div>
<div class="a" style="left:1689px;top:528px;width:43px;height:16px;background:#4a4a4a;border-right:1px solid #2e2e2e;border-top:1px solid #5a5a5a"></div>
<div class="a" style="left:1732px;top:528px;width:64px;height:16px;background:#383838;border-right:1px solid #2e2e2e"></div>
<div class="a" style="left:1796px;top:528px;width:83px;height:16px;background:#383838;border-right:1px solid #2e2e2e"></div>
<div class="t" style="transform:scaleX(0.943);transform-origin:0 0;left:1702px;top:532px;font-size:10.5px;font-weight:bold;color:#e6e6e6">Linje</div>
<div class="t" style="transform:scaleX(0.957);transform-origin:0 0;left:1739px;top:532px;font-size:10.5px;font-weight:bold;color:#a6a6a6">Övertoning</div>
<div class="a" style="left:1796px;top:528px;width:83px;height:16px;overflow:hidden"><div class="t" style="transform:scaleX(0.93);transform-origin:0 0;left:7px;top:4px;font-size:10.5px;font-weight:bold;color:#a6a6a6">Genomskinlighet</div></div>
<svg class="a" style="left:1694px;top:530px" width="8" height="12"><path d="M0.8 4.5L3.3 1.8L5.8 4.5 M0.8 7.5L3.3 10.2L5.8 7.5" stroke="#ddd" stroke-width="1.1" fill="none"/></svg>
<svg class="a" style="left:1900px;top:532px" width="16" height="9"><path d="M0 2 L4 2 L2 4.5Z" fill="#ddd"/><path d="M5 0.5h10M5 3h10M5 5.5h10M5 8h10" stroke="#ddd" stroke-width="1"/></svg>
<div class="a" style="left:1689px;top:544px;width:228px;height:33px;background:#4a4a4a"></div>
<div class="t" style="transform:scaleX(1.010);transform-origin:0 0;left:1694px;top:556px;font-size:10.5px;color:#e0e0e0">Bredd:</div>
<div class="dd" style="left:1729px;top:552px;width:15px;height:19px;background:#4e4e4e"></div>
<div class="a" style="left:1730px;top:561px;width:13px;height:1px;background:#2b2b2b"></div>
<div class="a" style="left:1733px;top:555px;width:0;height:0;border-left:3.5px solid transparent;border-right:3.5px solid transparent;border-bottom:4px solid #ccc"></div>
<div class="tri" style="left:1733px;top:564px;border-left-width:3.5px;border-right-width:3.5px;border-top-width:4px;border-top-color:#ccc"></div>
<div class="a" style="left:1744px;top:552px;width:53px;height:19px;background:#a7a7a7;border-top:1px solid #2b2b2b;border-bottom:1px solid #2b2b2b"></div>
<div class="t" style="transform:scaleX(1.006);transform-origin:0 0;left:1749px;top:556px;font-size:10.5px;color:#111">1 pt</div>
<div class="dd" style="left:1797px;top:552px;width:16px;height:19px"></div>
<div class="tri" style="left:1801px;top:559px;border-left-width:4px;border-right-width:4px;border-top-width:5px"></div>
<div class="a" style="left:1689px;top:579px;width:228px;height:18px;background:#383838;border-top:1px solid #2a2a2a"></div>
<div class="a" style="left:1689px;top:580px;width:57px;height:17px;background:#4a4a4a;border-right:1px solid #2e2e2e;border-top:1px solid #5a5a5a"></div>
<div class="a" style="left:1746px;top:580px;width:76px;height:17px;background:#383838;border-right:1px solid #2e2e2e"></div>
<div class="t" style="transform:scaleX(0.911);transform-origin:0 0;left:1696px;top:584px;font-size:10.5px;font-weight:bold;color:#e6e6e6">Utseende</div>
<div class="t" style="transform:scaleX(0.981);transform-origin:0 0;left:1753px;top:584px;font-size:10.5px;font-weight:bold;color:#a6a6a6">Grafikformat</div>
<svg class="a" style="left:1900px;top:584px" width="16" height="9"><path d="M0 2 L4 2 L2 4.5Z" fill="#ddd"/><path d="M5 0.5h10M5 3h10M5 5.5h10M5 8h10" stroke="#ddd" stroke-width="1"/></svg>
<div class="a" style="left:1689px;top:597px;width:228px;height:205px;background:#4a4a4a"></div>
<div class="a" style="left:1694px;top:603px;width:220px;height:180px;border:1px solid #2e2e2e"></div>
<div class="a" style="left:1695px;top:628px;width:218px;height:1px;background:#333"></div>
<div class="a" style="left:1695px;top:653px;width:218px;height:1px;background:#333"></div>
<div class="a" style="left:1695px;top:678px;width:218px;height:1px;background:#333"></div>
<div class="a" style="left:1695px;top:703px;width:218px;height:1px;background:#333"></div>
<div class="a" style="left:1719px;top:629px;width:1px;height:74px;background:#333"></div>
<div class="a" style="left:1698px;top:606px;width:19px;height:19px;background:#fff;border:1px solid #222;box-shadow:0 0 0 1px #666"></div>
<div class="t" style="transform:scaleX(1.026);transform-origin:0 0;left:1742px;top:610px;font-size:10.5px;font-weight:bold;color:#e8e8e8">Ingen markering</div>
<svg class="a" style="left:1699px;top:636px" width="16" height="60"><g fill="#bbb"><path d="M1 5 Q7 -1 13 5 Q7 11 1 5Z"/><path d="M1 30 Q7 24 13 30 Q7 36 1 30Z"/><path d="M1 54 Q7 48 13 54 Q7 60 1 54Z" fill="#5a5a5a"/></g><circle cx="7" cy="5" r="2" fill="#333"/><circle cx="7" cy="30" r="2" fill="#333"/><circle cx="7" cy="54" r="2" fill="#4a4a4a"/></svg>
<div class="a" style="left:1725px;top:637px;width:0;height:0;border-top:4.5px solid transparent;border-bottom:4.5px solid transparent;border-left:6px solid #ddd"></div>
<div class="a" style="left:1725px;top:662px;width:0;height:0;border-top:4.5px solid transparent;border-bottom:4.5px solid transparent;border-left:6px solid #ddd"></div>
<div class="t org" style="transform:scaleX(1.016);transform-origin:0 0;left:1742px;top:636px;font-size:10.5px">Linje:</div>
<div class="a" style="left:1742px;top:647px;width:25px;height:1px;background:repeating-linear-gradient(90deg,#f08c1e 0 1px,transparent 1px 2px)"></div>
<div class="a" style="left:1784px;top:632px;width:18px;height:18px;background:#000;border:2px solid #fff;box-shadow:0 0 0 1px #333"></div>
<div class="t" style="transform:scaleX(1.017);transform-origin:0 0;left:1816px;top:636px;font-size:10.5px;color:#e0e0e0">1 pt</div>
<div class="t" style="transform:scaleX(0.957);transform-origin:0 0;left:1742px;top:661px;font-size:10.5px;color:#e0e0e0">Fylln.:</div>
<div class="a" style="left:1784px;top:657px;width:18px;height:18px;background:#fff;border:1px solid #222;box-shadow:0 0 0 1px #666"></div>
<svg class="a" style="left:1787px;top:660px" width="12" height="12"><path d="M1.5 10.5L10.5 1.5" stroke="#e0103a" stroke-width="1.8"/></svg>
<div class="t org" style="transform:scaleX(0.955);transform-origin:0 0;left:1742px;top:685px;font-size:10.5px">Opacitet:</div>
<div class="a" style="left:1742px;top:696px;width:39px;height:1px;background:repeating-linear-gradient(90deg,#f08c1e 0 1px,transparent 1px 2px)"></div>
<div class="t" style="transform:scaleX(0.958);transform-origin:0 0;left:1786px;top:685px;font-size:10.5px;color:#e0e0e0">Standard</div>
<svg class="a" style="left:1694px;top:784px" width="220" height="16"><g fill="none" stroke="#cfcfcf">
<rect x="7.5" y="3.5" width="9" height="9" stroke-width="1.4"/>
<rect x="33.5" y="3.5" width="9" height="9" stroke-width="1.2"/><rect x="36" y="6" width="4" height="4" fill="#aaa" stroke="none"/>
<circle cx="139" cy="8" r="5" stroke-width="1.5"/><path d="M135.5 4.5L142.5 11.5" stroke-width="1.5"/>
<path d="M160 4 L170 4 L170 13 L164 13 L164 9 L160 9Z" fill="#666" stroke="none"/>
<path d="M186 5h12M188 5l1 8h8l1-8M190 3h6" stroke="#666"/>
</g><text x="57" y="13" font-family="Liberation Serif" font-style="italic" font-size="13" fill="#cfcfcf">fx</text><path d="M70 10L75 10L72.5 12.5Z" fill="#ccc"/></svg>
<div class="a" style="left:1689px;top:804px;width:228px;height:17px;background:#383838;border-top:1px solid #2a2a2a"></div>
<div class="a" style="left:1689px;top:805px;width:40px;height:16px;background:#4a4a4a;border-right:1px solid #2e2e2e;border-top:1px solid #5a5a5a"></div>
<div class="a" style="left:1729px;top:805px;width:48px;height:16px;background:#383838;border-right:1px solid #2e2e2e"></div>
<div class="t" style="transform:scaleX(0.867);transform-origin:0 0;left:1696px;top:809px;font-size:10.5px;font-weight:bold;color:#e6e6e6">Lager</div>
<div class="t" style="transform:scaleX(0.988);transform-origin:0 0;left:1736px;top:809px;font-size:10.5px;font-weight:bold;color:#a6a6a6">Ritytor</div>
<svg class="a" style="left:1900px;top:809px" width="16" height="9"><path d="M0 2 L4 2 L2 4.5Z" fill="#ddd"/><path d="M5 0.5h10M5 3h10M5 5.5h10M5 8h10" stroke="#ddd" stroke-width="1"/></svg>
<div class="a" style="left:1689px;top:821px;width:228px;height:209px;background:#4a4a4a"></div>
<div class="a" style="left:1694px;top:828px;width:220px;height:182px;border:1px solid #2e2e2e"></div>
<div class="a" style="left:1695px;top:829px;width:218px;height:21px;background:#535a66"></div>
<div class="a" style="left:1695px;top:850px;width:218px;height:1px;background:#333"></div>
<div class="a" style="left:1715px;top:829px;width:1px;height:21px;background:#3a3f48"></div>
<div class="a" style="left:1735px;top:829px;width:1px;height:21px;background:#3a3f48"></div>
<div class="a" style="left:1738px;top:830px;width:4px;height:19px;background:#5b7ee8"></div>
<div class="a" style="left:1743px;top:829px;width:1px;height:21px;background:#3a3f48"></div>
<div class="a" style="left:1878px;top:829px;width:1px;height:21px;background:#3a3f48"></div>
<svg class="a" style="left:1697px;top:833px" width="16" height="12"><path d="M1 6 Q7 0 14 6 Q7 12 1 6Z" fill="#bbb"/><circle cx="7.5" cy="6" r="2" fill="#333"/></svg>
<div class="a" style="left:1748px;top:835px;width:0;height:0;border-top:4.5px solid transparent;border-bottom:4.5px solid transparent;border-left:6px solid #ddd"></div>
<div class="a" style="left:1764px;top:830px;width:18px;height:19px;background:#fff;border:1px solid #111"></div>
<svg class="a" style="left:0;top:0" width="1917" height="1033"><use href="#horse" transform="translate(1752.06 828.76) scale(0.0198)" fill="none" stroke="#111" stroke-width="0.45"/></svg>
<div class="t" style="transform:scaleX(0.949);transform-origin:0 0;left:1787px;top:834px;font-size:10.5px;color:#e8e8e8">Lager 1</div>
<svg class="a" style="left:1883px;top:834px" width="11" height="11"><circle cx="5.5" cy="5.5" r="4.3" fill="none" stroke="#ccc" stroke-width="1.1"/></svg>
<svg class="a" style="left:1904px;top:830px" width="9" height="9"><path d="M1 0L9 0L9 8Z" fill="#ddd"/></svg>
<div class="t" style="transform:scaleX(0.928);transform-origin:0 0;left:1694px;top:1015px;font-size:10.5px;color:#e0e0e0">1 lager</div>
<svg class="a" style="left:1776px;top:1012px" width="120" height="16"><g fill="none">
<circle cx="9" cy="6" r="3.5" stroke="#666" stroke-width="1.3"/><path d="M6.5 8.5 L3 12" stroke="#666" stroke-width="1.5"/>
<rect x="27.5" y="3.5" width="8" height="7" stroke="#cfcfcf"/><rect x="30.5" y="6.5" width="8" height="7" stroke="#cfcfcf" fill="#555"/>
<path d="M52 4 L55 4 M52 4 L52 7 L55 7 M56 5 L64 5 L64 12 L58 12 L58 8 L56 8Z" stroke="#cfcfcf" fill="#cfcfcf" stroke-width="0.8"/>
<path d="M80 4 L90 4 L90 13 L84 13 L84 9 L80 9Z" fill="#cfcfcf"/>
<path d="M105 5h12M107 5l1 8h8l1-8M109 3h6" stroke="#666"/>
</g></svg>
</body></html>
